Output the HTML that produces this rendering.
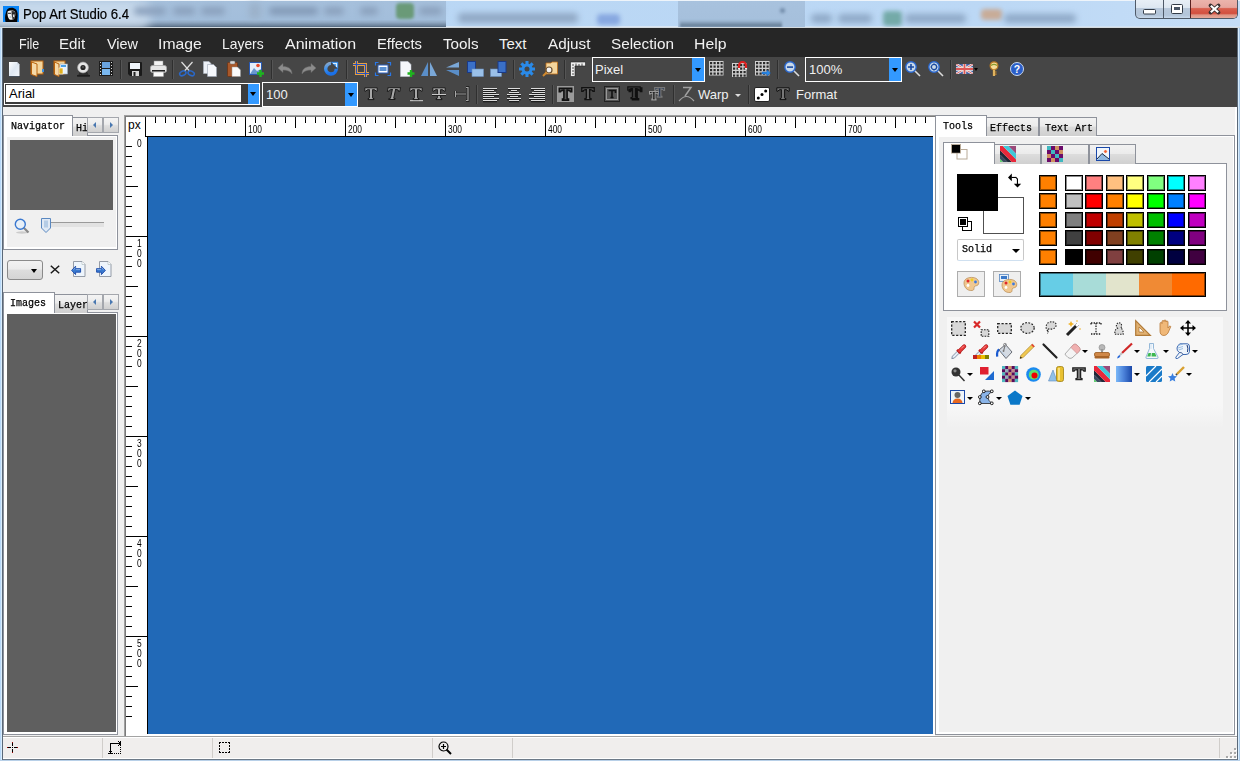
<!DOCTYPE html><html><head><meta charset="utf-8"><style>*{margin:0;padding:0;box-sizing:border-box}
html,body{width:1240px;height:761px;overflow:hidden;background:#c4dcf4;font-family:"Liberation Sans",sans-serif;position:relative}
.a{position:absolute}
svg{position:absolute;overflow:visible}
.t{white-space:nowrap;line-height:1}
.mi{color:#f2f2f2;font-size:15px}
.sep{width:2px;border-left:1px solid #333;border-right:1px solid #5a5a5a}
.tab{font-family:"Liberation Mono",monospace;font-size:11px;color:#000;-webkit-text-stroke:.25px #000;transform:scaleX(.91);transform-origin:0 0}
</style></head><body><div class="a" style="left:0;top:0;width:1240px;height:28px;overflow:hidden;background:linear-gradient(90deg,#b8d6f4 0,#bcd8f5 1000px,#c6def7 1240px)"><div class="a" style="left:-4px;top:0;width:450px;height:28px;background:linear-gradient(180deg,#a6c0dc 0,#a3bedb 70%,#90a8c2 80%,#6a8098 92%,#4d6379 97%,#b8c4d0 100%);filter:blur(.6px)"></div><div class="a" style="left:-10px;top:0px;width:160px;height:30px;background:rgba(214,228,242,.7);filter:blur(5px);border-radius:10px"></div><div class="a" style="left:678px;top:0;width:127px;height:28px;background:linear-gradient(180deg,#a8c2de 0,#a6c0dc 70%,#a6c0dc 100%);filter:blur(.6px)"></div><div class="a" style="left:680px;top:20px;width:102px;height:7px;background:linear-gradient(180deg,rgba(80,104,128,0),rgba(80,104,128,.9));filter:blur(1px)"></div><div class="a" style="left:0;top:0;width:1240px;height:1px;background:#eef4fa"></div><div class="a" style="left:446px;top:26px;width:232px;height:2px;background:#d8e6f4"></div><div class="a" style="left:805px;top:26px;width:435px;height:2px;background:#d0e2f4"></div><div class="a" style="left:134px;top:7px;width:32px;height:8px;background:#8aa0bc;filter:blur(3px);border-radius:4px"></div><div class="a" style="left:173px;top:7px;width:22px;height:8px;background:#8aa0bc;filter:blur(3px);border-radius:4px"></div><div class="a" style="left:201px;top:7px;width:24px;height:8px;background:#8aa0bc;filter:blur(3px);border-radius:4px"></div><div class="a" style="left:249px;top:3px;width:12px;height:16px;background:#9cb2ca;filter:blur(3px);border-radius:4px"></div><div class="a" style="left:269px;top:7px;width:49px;height:8px;background:#8299b6;filter:blur(3px);border-radius:4px"></div><div class="a" style="left:324px;top:7px;width:20px;height:8px;background:#8aa0bc;filter:blur(3px);border-radius:4px"></div><div class="a" style="left:360px;top:7px;width:18px;height:8px;background:#8aa0bc;filter:blur(3px);border-radius:4px"></div><div class="a" style="left:396px;top:3px;width:18px;height:16px;background:#6a9a78;filter:blur(1.5px);border-radius:4px"></div><div class="a" style="left:419px;top:7px;width:23px;height:8px;background:#8aa0bc;filter:blur(3px);border-radius:4px"></div><div class="a" style="left:458px;top:13px;width:120px;height:10px;background:#90a8c4;filter:blur(3px);border-radius:4px"></div><div class="a" style="left:597px;top:14px;width:23px;height:11px;background:#88a8e0;filter:blur(2px);border-radius:4px"></div><div class="a" style="left:780px;top:8px;width:5px;height:5px;background:#708aa8;filter:blur(1.5px);border-radius:4px"></div><div class="a" style="left:811px;top:14px;width:21px;height:9px;background:#8ea8c6;filter:blur(3px);border-radius:4px"></div><div class="a" style="left:838px;top:14px;width:34px;height:9px;background:#8ea8c6;filter:blur(3px);border-radius:4px"></div><div class="a" style="left:883px;top:11px;width:19px;height:15px;background:#74aaa8;filter:blur(2px);border-radius:4px"></div><div class="a" style="left:905px;top:14px;width:61px;height:9px;background:#8ea8c6;filter:blur(3px);border-radius:4px"></div><div class="a" style="left:981px;top:9px;width:21px;height:11px;background:#c8ac98;filter:blur(2px);border-radius:4px"></div><div class="a" style="left:1004px;top:14px;width:72px;height:9px;background:#8ea8c6;filter:blur(3px);border-radius:4px"></div></div><svg style="left:3px;top:6px" width="16" height="16" viewBox="0 0 16 16" ><rect width="16" height="16" fill="#0a86f8"/><path d="M2.5 16 C2 13 1.8 10 2.8 7 C3.5 3.5 5 1.8 8.5 1.8 C12 1.8 14.2 4 14.6 7.5 C15 10.5 14.3 13.5 14.2 16Z" fill="#050505"/><path d="M4.6 5.5 C6 4.2 10.5 4 12 5.5 C12.6 8 12.3 11 11 13 C10 14 7 14.2 6 13 C4.8 11.5 4.2 8 4.6 5.5Z" fill="#f2f2f2"/><path d="M8.5 5 C10.5 5 12 5.5 12 5.5 C12.6 8 12.3 11 11 13 L9.5 13.8 C9.5 11 8.2 9 8.5 5Z" fill="#3a3a3a"/><path d="M5 7.3 H8 M9 7.3 H11.8" stroke="#222" stroke-width="1"/><rect x="10" y="8.5" width="1.5" height="2.5" fill="#ddd"/><path d="M6.5 11 H8.5" stroke="#9aa" stroke-width="1"/></svg><div class="a t " style="left:23.2px;top:7px;font-size:14px;color:#000;transform:scaleX(.94);transform-origin:0 0;-webkit-text-stroke:.2px #000">Pop Art Studio 6.4</div><div class="a" style="left:1135px;top:-1px;width:103px;height:20px;border:1px solid #4f5a68;border-top:none;border-radius:0 0 5px 5px;overflow:hidden;background:linear-gradient(180deg,#e9f0f7 0,#dde7f1 45%,#b9c9db 50%,#b3c5d9 85%,#c8d8ea 100%)"><div class="a" style="left:27px;top:0;width:1px;height:20px;background:#4f5a68"></div><div class="a" style="left:54px;top:0;width:48px;height:20px;border-left:1px solid #5a2020;background:linear-gradient(180deg,#ecb6ae 0,#e6a69e 42%,#d9604f 48%,#d2503f 72%,#de9484 80%,#e8b0a0 100%)"></div></div><svg style="left:1143px;top:9px" width="13" height="6" viewBox="0 0 13 6" ><rect x=".5" y=".5" width="12" height="4.5" rx="1" fill="#fff" stroke="#333c48"/></svg><svg style="left:1171px;top:4px" width="12" height="10" viewBox="0 0 12 10" ><rect x=".5" y=".5" width="11" height="9" rx="1" fill="#fff" stroke="#333c48"/><rect x="3" y="3" width="6" height="3" fill="#4a5666"/></svg><svg style="left:1209px;top:4px" width="11" height="10" viewBox="0 0 11 10" ><path d="M1.5 1.5 L9.5 8.5 M9.5 1.5 L1.5 8.5" stroke="#3a3030" stroke-width="3.8" stroke-linecap="round"/><path d="M1.8 1.7 L9.2 8.3 M9.2 1.7 L1.8 8.3" stroke="#fff" stroke-width="2.2"/></svg><div class="a " style="left:0px;top:27px;width:2px;height:734px;background:linear-gradient(90deg,#b8d8f8 0,#b8d8f8 1px,#d8ecfc 1px)"></div><div class="a " style="left:2px;top:28px;width:1px;height:733px;background:#5a6878"></div><div class="a " style="left:1237px;top:28px;width:1px;height:733px;background:#5a6878"></div><div class="a " style="left:1238px;top:27px;width:2px;height:734px;background:linear-gradient(90deg,#d8ecfc 0,#d8ecfc 1px,#a8c8e8 1px)"></div><div class="a " style="left:0px;top:27px;width:1240px;height:1px;background:#d4dade"></div><div class="a " style="left:0px;top:760px;width:1240px;height:1px;background:#b8d0e8"></div><div class="a " style="left:3px;top:28px;width:1234px;height:29px;background:#262626"></div><div class="a t mi" style="left:18.66px;top:36px;transform:scaleX(0.837);transform-origin:0 0">File</div><div class="a t mi" style="left:59.49px;top:36px;transform:scaleX(1.010);transform-origin:0 0">Edit</div><div class="a t mi" style="left:107.0px;top:36px;transform:scaleX(0.962);transform-origin:0 0">View</div><div class="a t mi" style="left:158.45px;top:36px;transform:scaleX(1.050);transform-origin:0 0">Image</div><div class="a t mi" style="left:222.07px;top:36px;transform:scaleX(0.926);transform-origin:0 0">Layers</div><div class="a t mi" style="left:285.2px;top:36px;transform:scaleX(1.065);transform-origin:0 0">Animation</div><div class="a t mi" style="left:376.51px;top:36px;transform:scaleX(0.986);transform-origin:0 0">Effects</div><div class="a t mi" style="left:442.5px;top:36px;transform:scaleX(1.014);transform-origin:0 0">Tools</div><div class="a t mi" style="left:499.0px;top:36px;transform:scaleX(1.000);transform-origin:0 0">Text</div><div class="a t mi" style="left:548.3px;top:36px;transform:scaleX(1.017);transform-origin:0 0">Adjust</div><div class="a t mi" style="left:611.18px;top:36px;transform:scaleX(1.020);transform-origin:0 0">Selection</div><div class="a t mi" style="left:694.35px;top:36px;transform:scaleX(1.053);transform-origin:0 0">Help</div><div class="a " style="left:3px;top:57px;width:1234px;height:50px;background:#464646"></div><div class="a " style="left:3px;top:107px;width:1234px;height:629px;background:#f0f0f0"></div><div class="a " style="left:1235px;top:107px;width:2px;height:629px;background:#fff"></div><div class="a " style="left:3px;top:736px;width:1234px;height:24px;background:#f0eeed;border-top:1px solid #a3a3a3;border-bottom:1px solid #6d7a88;box-shadow:inset 0 1px 0 #fff,inset 0 -1px 0 #fff"></div><svg style="left:9px;top:62px" width="11" height="15" viewBox="0 0 11 15" ><defs><linearGradient id="pg" x1="0" y1="0" x2="1" y2="1"><stop offset="0" stop-color="#fff"/><stop offset=".5" stop-color="#dfe8f2"/><stop offset="1" stop-color="#f4f8fc"/></linearGradient></defs><path d="M0 0H8L10.5 2.5V14.5H0Z" fill="url(#pg)"/><path d="M8 0V2.5H10.5" fill="#cfd8e2"/><rect x="0" y="14" width="11" height="1" fill="#243040" opacity=".7"/></svg><svg style="left:31px;top:61px" width="13" height="16" viewBox="0 0 13 16" ><rect x="0" y="0" width="12" height="13" fill="#f3d59d" stroke="#b8620c" stroke-width="1"/><path d="M0.5 1 L6 3 V15.5 L0.5 13.5Z" fill="#f5d9a8" stroke="#b8620c"/><rect x="11" y="8" width="2" height="3" fill="#3a8fe0"/></svg><svg style="left:54px;top:61px" width="14" height="16" viewBox="0 0 14 16" ><rect x="0" y="0" width="11" height="13" fill="#f3d59d" stroke="#b8620c"/><path d="M0.5 1 L5 3 V15.5 L0.5 13.5Z" fill="#f5d9a8" stroke="#b8620c"/><rect x="6" y="3" width="7.5" height="10" fill="#e8f2fc" stroke="#9ab" stroke-width=".6"/><rect x="7" y="4" width="5" height="2" fill="#4aa0e8"/><rect x="5" y="7" width="4" height="6" fill="#e0b020" stroke="#fff" stroke-width=".6"/></svg><svg style="left:76px;top:61px" width="15" height="16" viewBox="0 0 15 16" ><path d="M2 15 L5 10 H10 L13 15Z" fill="#2e2e2e" stroke="#262626" stroke-width=".6"/><rect x="1" y="14" width="13" height="1.6" fill="#1e1e1e"/><circle cx="7" cy="6.5" r="5.4" fill="#e6e6e6" stroke="#a8a8a8" stroke-width=".7"/><circle cx="7" cy="6.5" r="2.6" fill="#262626"/><circle cx="7" cy="6" r=".9" fill="#555"/></svg><svg style="left:99px;top:61px" width="14" height="15" viewBox="0 0 14 15" ><rect width="14" height="15" fill="#1e1e1e"/><rect x="3" y="1" width="8" height="6" fill="#6aa4e0"/><rect x="3" y="8" width="8" height="6" fill="#7ab8f0"/><g fill="#ddd"><rect x="1" y="1" width="1" height="1"/><rect x="1" y="4" width="1" height="1"/><rect x="1" y="7" width="1" height="1"/><rect x="1" y="10" width="1" height="1"/><rect x="1" y="13" width="1" height="1"/><rect x="12" y="1" width="1" height="1"/><rect x="12" y="4" width="1" height="1"/><rect x="12" y="7" width="1" height="1"/><rect x="12" y="10" width="1" height="1"/><rect x="12" y="13" width="1" height="1"/></g></svg><svg style="left:128px;top:62px" width="14" height="14" viewBox="0 0 14 14" ><path d="M0 1 Q0 0 1 0 H13 Q14 0 14 1 V13 Q14 14 13 14 H2 L0 12Z" fill="#1a1a1a"/><rect x="2" y="1" width="10" height="6" fill="#eef4fa"/><rect x="4" y="9" width="7" height="5" fill="#d8d8d8"/><rect x="5.5" y="10" width="2" height="4" fill="#222"/></svg><svg style="left:150px;top:61px" width="17" height="16" viewBox="0 0 17 16" ><rect x="4" y="0" width="9" height="5" fill="#f4f4f4" stroke="#999" stroke-width=".5"/><rect x="0.5" y="4.5" width="16" height="7" rx="2" fill="#e6e6e6" stroke="#aaa" stroke-width=".8"/><rect x="2" y="9" width="13" height="1.6" fill="#222"/><rect x="3.5" y="11" width="10" height="4.5" fill="#fafafa" stroke="#aaa" stroke-width=".5"/></svg><svg style="left:179px;top:61px" width="16" height="16" viewBox="0 0 16 16" ><path d="M2.5 1 L10.5 10 M13.5 1 L5.5 10" stroke="#e0e0e0" stroke-width="1.2"/><ellipse cx="3.8" cy="12.3" rx="3.3" ry="2.2" transform="rotate(-25 3.8 12.3)" fill="none" stroke="#2a68c8" stroke-width="1.5"/><ellipse cx="12.2" cy="12.3" rx="3.3" ry="2.2" transform="rotate(25 12.2 12.3)" fill="none" stroke="#2a68c8" stroke-width="1.5"/></svg><svg style="left:203px;top:61px" width="14" height="16" viewBox="0 0 14 16" ><path d="M0.5 0.5H6L8 2.5V12.5H0.5Z" fill="#eef2f8" stroke="#b0b8c4" stroke-width=".6"/><path d="M4.5 3.5H10.5L13.5 6.5V15.5H4.5Z" fill="#f6f8fc" stroke="#9aa4b4" stroke-width=".6"/></svg><svg style="left:227px;top:61px" width="14" height="16" viewBox="0 0 14 16" ><rect x="0.5" y="1.5" width="10" height="14" rx="1" fill="#a8582a" stroke="#6e3414" stroke-width=".8"/><rect x="3" y="0" width="5" height="3" rx="1" fill="#d8d8d8" stroke="#777" stroke-width=".5"/><path d="M5 6H10.5L13.5 9V15.5H5Z" fill="#fafafa" stroke="#999" stroke-width=".5"/></svg><svg style="left:249px;top:61px" width="15" height="16" viewBox="0 0 15 16" ><rect x="0.5" y="1.5" width="12" height="12" fill="#e4eefa" stroke="#2858b0" stroke-width="1"/><path d="M1 13 L5 7 L8 10 L12 8 V13Z" fill="#6a98d0"/><circle cx="9" cy="4.5" r="1.8" fill="#e84a2a"/><path d="M11.5 9 V16 M8 12.5 H15" stroke="#1eb41e" stroke-width="2.4"/></svg><div class="a " style="left:120px;top:60px;width:1px;height:19px;background:#2f2f2f;box-shadow:1px 0 0 #555"></div><div class="a " style="left:172px;top:60px;width:1px;height:19px;background:#2f2f2f;box-shadow:1px 0 0 #555"></div><div class="a " style="left:271px;top:60px;width:1px;height:19px;background:#2f2f2f;box-shadow:1px 0 0 #555"></div><div class="a " style="left:346px;top:60px;width:1px;height:19px;background:#2f2f2f;box-shadow:1px 0 0 #555"></div><div class="a " style="left:513px;top:60px;width:1px;height:19px;background:#2f2f2f;box-shadow:1px 0 0 #555"></div><div class="a " style="left:564px;top:60px;width:1px;height:19px;background:#2f2f2f;box-shadow:1px 0 0 #555"></div><div class="a " style="left:777px;top:60px;width:1px;height:19px;background:#2f2f2f;box-shadow:1px 0 0 #555"></div><div class="a " style="left:950px;top:60px;width:1px;height:19px;background:#2f2f2f;box-shadow:1px 0 0 #555"></div><svg style="left:277px;top:63px" width="16" height="12" viewBox="0 0 16 12" ><path d="M1 5 L6 0.5 V3.5 C11 3.5 15 5.5 15 11 C13 8 10 7 6 7 V9.5Z" fill="#8c8c8c" stroke="#6c6c6c" stroke-width=".5"/></svg><svg style="left:301px;top:63px" width="16" height="12" viewBox="0 0 16 12" ><path d="M15 5 L10 0.5 V3.5 C5 3.5 1 5.5 1 11 C3 8 6 7 10 7 V9.5Z" fill="#8c8c8c" stroke="#6c6c6c" stroke-width=".5"/></svg><svg style="left:323px;top:61px" width="16" height="16" viewBox="0 0 16 16" ><defs><linearGradient id="rg" x1="0" y1="0" x2=".3" y2="1"><stop offset="0" stop-color="#8aa8c8"/><stop offset=".5" stop-color="#3a90f0"/><stop offset="1" stop-color="#1a70e8"/></linearGradient></defs><path d="M8 2.4 A5.3 5.3 0 1 0 13.3 7.7" fill="none" stroke="url(#rg)" stroke-width="3.4"/><path d="M8.2 1 H15 V7.8Z" fill="#4a9ef0" stroke="#2a70d0" stroke-width=".5"/><path d="M10 2.5 H13.5 V6" fill="none" stroke="#d8ecff" stroke-width="1.1"/></svg><svg style="left:353px;top:61px" width="16" height="16" viewBox="0 0 16 16" ><path d="M3.5 0 V12.5 H16 M0 3.5 H12.5 V16" fill="none" stroke="#e8a040" stroke-width="3"/><path d="M3.5 0 V12.5 H16 M0 3.5 H12.5 V16" fill="none" stroke="#2050c0" stroke-width="1.2"/></svg><svg style="left:375px;top:62px" width="16" height="14" viewBox="0 0 16 14" ><rect x="3" y="3" width="10" height="8" fill="#fff" stroke="#2a60c0"/><rect x="4.5" y="5" width="7" height="4" fill="#5a90d0"/><path d="M0.5 3.5V0.5H3.5 M12.5 0.5H15.5V3.5 M15.5 10.5V13.5H12.5 M3.5 13.5H0.5V10.5" fill="none" stroke="#2a78e8" stroke-width="1.2"/></svg><svg style="left:400px;top:61px" width="15" height="16" viewBox="0 0 15 16" ><path d="M0.5 0.5H8L11 3.5V15.5H0.5Z" fill="#f4f6fa" stroke="#c4ccd8" stroke-width=".5"/><path d="M11 9 V16 M7.5 12.5 H14.5" stroke="#1eb41e" stroke-width="2.4"/></svg><svg style="left:421px;top:62px" width="16" height="14" viewBox="0 0 16 14" ><path d="M7 0 V14 H0Z" fill="#5a8ec8"/><path d="M9 0 V14 H16Z" fill="#7aa8d8"/></svg><svg style="left:446px;top:62px" width="13" height="14" viewBox="0 0 13 14" ><path d="M13 0 L0 5.5 H13Z" fill="#7aa8d8"/><path d="M13 14 L0 8 H13Z" fill="#5a8ec8"/></svg><svg style="left:467px;top:61px" width="17" height="16" viewBox="0 0 17 16" ><rect x="0.5" y="0.5" width="8" height="11" fill="#3a70c8" stroke="#1a3a88"/><rect x="5" y="8" width="11.5" height="7.5" fill="#9ac0e8" stroke="#6a90c0" stroke-width=".6"/></svg><svg style="left:490px;top:61px" width="17" height="16" viewBox="0 0 17 16" ><rect x="0.5" y="8" width="11" height="7.5" fill="#9ac0e8" stroke="#6a90c0" stroke-width=".6"/><rect x="8" y="0.5" width="8" height="11" fill="#3a70c8" stroke="#1a3a88"/></svg><svg style="left:519px;top:61px" width="16" height="16" viewBox="0 0 16 16" ><g fill="#2a8ae8"><circle cx="8" cy="8" r="5.5"/><rect x="6.5" y="0" width="3" height="16"/><rect x="0" y="6.5" width="16" height="3"/><rect x="6.5" y="0" width="3" height="16" transform="rotate(45 8 8)"/><rect x="6.5" y="0" width="3" height="16" transform="rotate(-45 8 8)"/></g><circle cx="8" cy="8" r="2.5" fill="#464646"/></svg><svg style="left:542px;top:61px" width="16" height="16" viewBox="0 0 16 16" ><path d="M4 2 H9 L10 1 H15.5 V13 H4Z" fill="#f3d59d" stroke="#c07018" stroke-width=".8"/><circle cx="7" cy="9" r="3" fill="#f4f4f4" stroke="#6a5030" stroke-width="1.2"/><path d="M4.8 11.2 L1 15" stroke="#d08a30" stroke-width="2"/></svg><svg style="left:570px;top:61px" width="16" height="16" viewBox="0 0 16 16" ><path d="M0.5 1H15.5V5H5V15.5H0.5Z" fill="#f0f0f0" stroke="#222" stroke-width=".6"/><g stroke="#222" stroke-width=".8"><path d="M3 5V3 M6 5V2.5 M9 5V3 M12 5V2.5 M4 7H2 M4 10H2 M4 13H2"/></g></svg><div class="a" style="left:592px;top:57px;width:113px;height:25px;border:1px solid #fff;background:#464646"></div><div class="a" style="left:692px;top:58px;width:12px;height:23px;background:#3399ff"></div><div class="a" style="left:695px;top:68px;width:0;height:0;border-left:3.5px solid transparent;border-right:3.5px solid transparent;border-top:4px solid #000"></div><div class="a t " style="left:595px;top:63px;font-size:13px;color:#f0f0f0">Pixel</div><svg style="left:709px;top:61px" width="16" height="16" viewBox="0 0 16 16" ><rect x="0" y="0" width="14.5" height="14.5" fill="#cfcfcf"/><rect x="1.0" y="1.0" width="2.2" height="2.2" fill="#2a2a2a"/><rect x="1.0" y="4.5" width="2.2" height="2.2" fill="#2a2a2a"/><rect x="1.0" y="8.0" width="2.2" height="2.2" fill="#2a2a2a"/><rect x="1.0" y="11.5" width="2.2" height="2.2" fill="#2a2a2a"/><rect x="4.5" y="1.0" width="2.2" height="2.2" fill="#2a2a2a"/><rect x="4.5" y="4.5" width="2.2" height="2.2" fill="#2a2a2a"/><rect x="4.5" y="8.0" width="2.2" height="2.2" fill="#2a2a2a"/><rect x="4.5" y="11.5" width="2.2" height="2.2" fill="#2a2a2a"/><rect x="8.0" y="1.0" width="2.2" height="2.2" fill="#2a2a2a"/><rect x="8.0" y="4.5" width="2.2" height="2.2" fill="#2a2a2a"/><rect x="8.0" y="8.0" width="2.2" height="2.2" fill="#2a2a2a"/><rect x="8.0" y="11.5" width="2.2" height="2.2" fill="#2a2a2a"/><rect x="11.5" y="1.0" width="2.2" height="2.2" fill="#2a2a2a"/><rect x="11.5" y="4.5" width="2.2" height="2.2" fill="#2a2a2a"/><rect x="11.5" y="8.0" width="2.2" height="2.2" fill="#2a2a2a"/><rect x="11.5" y="11.5" width="2.2" height="2.2" fill="#2a2a2a"/></svg><svg style="left:732px;top:61px" width="16" height="16" viewBox="0 0 16 16" ><rect x="0" y="2" width="14.5" height="14" fill="#cfcfcf"/><rect x="1.0" y="3.0" width="2.2" height="2.2" fill="#2a2a2a"/><rect x="1.0" y="6.5" width="2.2" height="2.2" fill="#2a2a2a"/><rect x="1.0" y="10.0" width="2.2" height="2.2" fill="#2a2a2a"/><rect x="1.0" y="13.5" width="2.2" height="2.2" fill="#2a2a2a"/><rect x="4.5" y="3.0" width="2.2" height="2.2" fill="#2a2a2a"/><rect x="4.5" y="6.5" width="2.2" height="2.2" fill="#2a2a2a"/><rect x="4.5" y="10.0" width="2.2" height="2.2" fill="#2a2a2a"/><rect x="4.5" y="13.5" width="2.2" height="2.2" fill="#2a2a2a"/><rect x="8.0" y="3.0" width="2.2" height="2.2" fill="#2a2a2a"/><rect x="8.0" y="6.5" width="2.2" height="2.2" fill="#2a2a2a"/><rect x="8.0" y="10.0" width="2.2" height="2.2" fill="#2a2a2a"/><rect x="8.0" y="13.5" width="2.2" height="2.2" fill="#2a2a2a"/><rect x="11.5" y="3.0" width="2.2" height="2.2" fill="#2a2a2a"/><rect x="11.5" y="6.5" width="2.2" height="2.2" fill="#2a2a2a"/><rect x="11.5" y="10.0" width="2.2" height="2.2" fill="#2a2a2a"/><rect x="11.5" y="13.5" width="2.2" height="2.2" fill="#2a2a2a"/><path d="M7 7 V4.5 A3.5 3.5 0 0 1 14 4.5 V7" fill="none" stroke="#e02020" stroke-width="2.2"/><path d="M7 7 V8.5 M14 7 V8.5" stroke="#eee" stroke-width="2.2"/></svg><svg style="left:755px;top:61px" width="16" height="16" viewBox="0 0 16 16" ><rect x="0" y="0" width="14.5" height="14.5" fill="#cfcfcf"/><rect x="1.0" y="1.0" width="2.2" height="2.2" fill="#2a2a2a"/><rect x="1.0" y="4.5" width="2.2" height="2.2" fill="#2a2a2a"/><rect x="1.0" y="8.0" width="2.2" height="2.2" fill="#2a2a2a"/><rect x="1.0" y="11.5" width="2.2" height="2.2" fill="#2a2a2a"/><rect x="4.5" y="1.0" width="2.2" height="2.2" fill="#2a2a2a"/><rect x="4.5" y="4.5" width="2.2" height="2.2" fill="#2a2a2a"/><rect x="4.5" y="8.0" width="2.2" height="2.2" fill="#2a2a2a"/><rect x="4.5" y="11.5" width="2.2" height="2.2" fill="#2a2a2a"/><rect x="8.0" y="1.0" width="2.2" height="2.2" fill="#2a2a2a"/><rect x="8.0" y="4.5" width="2.2" height="2.2" fill="#2a2a2a"/><rect x="8.0" y="8.0" width="2.2" height="2.2" fill="#2a2a2a"/><rect x="8.0" y="11.5" width="2.2" height="2.2" fill="#2a2a2a"/><rect x="11.5" y="1.0" width="2.2" height="2.2" fill="#2a2a2a"/><rect x="11.5" y="4.5" width="2.2" height="2.2" fill="#2a2a2a"/><rect x="11.5" y="8.0" width="2.2" height="2.2" fill="#2a2a2a"/><rect x="11.5" y="11.5" width="2.2" height="2.2" fill="#2a2a2a"/><path d="M7 11 H12 V9 L15.5 12 L12 15 V13 H7Z" fill="#2a8ae8" stroke="#1858b0" stroke-width=".5"/></svg><svg style="left:784px;top:61px" width="16" height="16" viewBox="0 0 16 16" ><path d="M9.5 9.5 L15 15" stroke="#dcdcdc" stroke-width="1.6"/><circle cx="6" cy="6" r="5.2" fill="#c8d8e8" stroke="#2a68d0" stroke-width="1.4"/><rect x="3" y="5.3" width="6" height="1.6" fill="#1a4aa0"/></svg><div class="a" style="left:805px;top:57px;width:97px;height:25px;border:1px solid #fff;background:#464646"></div><div class="a" style="left:889px;top:58px;width:12px;height:23px;background:#3399ff"></div><div class="a" style="left:892px;top:68px;width:0;height:0;border-left:3.5px solid transparent;border-right:3.5px solid transparent;border-top:4px solid #000"></div><div class="a t " style="left:809px;top:63px;font-size:13px;color:#f0f0f0">100%</div><svg style="left:905px;top:61px" width="16" height="16" viewBox="0 0 16 16" ><path d="M9.5 9.5 L15 15" stroke="#dcdcdc" stroke-width="1.6"/><circle cx="6" cy="6" r="5.2" fill="#c8d8e8" stroke="#2a68d0" stroke-width="1.4"/><path d="M3 6 H9 M6 3 V9" stroke="#1a4aa0" stroke-width="1.6"/></svg><svg style="left:928px;top:61px" width="16" height="16" viewBox="0 0 16 16" ><path d="M9.5 9.5 L15 15" stroke="#dcdcdc" stroke-width="1.6"/><circle cx="6" cy="6" r="5.2" fill="#c8d8e8" stroke="#2a68d0" stroke-width="1.4"/><circle cx="6" cy="6" r="2.6" fill="none" stroke="#1a4aa0" stroke-width="1.2"/><path d="M6 2.5V4 M6 8V9.5 M2.5 6H4 M8 6H9.5" stroke="#1a4aa0" stroke-width="1.2"/></svg><svg style="left:956px;top:64px" width="17" height="10" viewBox="0 0 17 10" ><defs><clipPath id="fl"><rect width="17" height="10"/></clipPath></defs><g clip-path="url(#fl)"><rect width="17" height="10" fill="#2a4a9a"/><path d="M0 0 L17 10 M17 0 L0 10" stroke="#f0e8e8" stroke-width="2.4"/><path d="M0 0 L17 10 M17 0 L0 10" stroke="#d04848" stroke-width=".9"/><path d="M8.5 0 V10 M0 5 H17" stroke="#f0e8e0" stroke-width="3.4"/><path d="M8.5 0 V10 M0 5 H17" stroke="#d84040" stroke-width="1.8"/><rect width="17" height="10" fill="#fff" opacity=".12"/></g></svg><div class="a" style="left:974px;top:68px;width:0;height:0;border-left:2.5px solid transparent;border-right:2.5px solid transparent;border-top:3px solid #000"></div><svg style="left:988px;top:61px" width="12" height="16" viewBox="0 0 12 16" ><circle cx="6" cy="4.8" r="3.9" fill="#f6dc98" stroke="#b87820" stroke-width="1.2"/><path d="M3 4.5 Q6 2.2 9 4.5" fill="none" stroke="#8a9a30" stroke-width="1.2"/><path d="M6 8.6 V15" stroke="#c88a28" stroke-width="2.4"/><path d="M6 8.6 V15" stroke="#f6dc98" stroke-width="1"/><path d="M7 11 H8.6 M7 13.2 H8.6" stroke="#c88a28" stroke-width="1.2"/></svg><svg style="left:1010px;top:62px" width="14" height="14" viewBox="0 0 14 14" ><circle cx="7" cy="7" r="6.5" fill="#2a5ec8" stroke="#c8d8f0" stroke-width="1"/><text x="7" y="11.2" text-anchor="middle" font-family="Liberation Sans" font-weight="bold" font-size="10.5" fill="#fff">?</text></svg><div class="a" style="left:4px;top:83px;width:256px;height:22px;border:1px solid #fff;background:#3c3c3c"></div><div class="a" style="left:6px;top:85px;width:235px;height:17px;background:#fff"></div><div class="a" style="left:248px;top:84px;width:11px;height:20px;background:#3399ff"></div><div class="a" style="left:250px;top:92px;width:0;height:0;border-left:3.5px solid transparent;border-right:3.5px solid transparent;border-top:4px solid #000"></div><div class="a t " style="left:9px;top:87px;font-size:13px;color:#000">Arial</div><div class="a" style="left:262px;top:82px;width:96px;height:25px;border:1px solid #fff;background:#464646"></div><div class="a" style="left:345px;top:83px;width:12px;height:23px;background:#3399ff"></div><div class="a" style="left:348px;top:93px;width:0;height:0;border-left:3.5px solid transparent;border-right:3.5px solid transparent;border-top:4px solid #000"></div><div class="a t " style="left:266px;top:88px;font-size:13px;color:#f0f0f0">100</div><svg style="left:364px;top:87px" width="15" height="14" viewBox="0 0 15 14" ><path d="M0.8 0.8 H13.2 V4.2 H12 Q11.5 2.6 9.2 2.6 H8.6 V10.8 Q8.6 11.6 10 11.6 V12.6 H4 V11.6 Q5.4 11.6 5.4 10.8 V2.6 H4.8 Q2.5 2.6 2 4.2 H0.8Z" fill="#a8a8a8" stroke="#1a1a1a" stroke-width="1" /></svg><svg style="left:386px;top:87px" width="15" height="14" viewBox="0 0 15 14" ><path d="M0.8 0.8 H13.2 V4.2 H12 Q11.5 2.6 9.2 2.6 H8.6 V10.8 Q8.6 11.6 10 11.6 V12.6 H4 V11.6 Q5.4 11.6 5.4 10.8 V2.6 H4.8 Q2.5 2.6 2 4.2 H0.8Z" fill="#a8a8a8" stroke="#1a1a1a" stroke-width="1" transform="skewX(-12) translate(1.5 0)"/></svg><svg style="left:409px;top:87px" width="15" height="14" viewBox="0 0 15 14" ><rect x="1" y="13" width="13" height="1.2" fill="#bbb"/><path d="M0.8 0.8 H13.2 V4.2 H12 Q11.5 2.6 9.2 2.6 H8.6 V10.8 Q8.6 11.6 10 11.6 V12.6 H4 V11.6 Q5.4 11.6 5.4 10.8 V2.6 H4.8 Q2.5 2.6 2 4.2 H0.8Z" fill="#a8a8a8" stroke="#1a1a1a" stroke-width="1" /></svg><svg style="left:432px;top:87px" width="15" height="14" viewBox="0 0 15 14" ><path d="M0.8 0.8 H13.2 V4.2 H12 Q11.5 2.6 9.2 2.6 H8.6 V10.8 Q8.6 11.6 10 11.6 V12.6 H4 V11.6 Q5.4 11.6 5.4 10.8 V2.6 H4.8 Q2.5 2.6 2 4.2 H0.8Z" fill="#a8a8a8" stroke="#1a1a1a" stroke-width="1" /></svg><div class="a" style="left:432px;top:94px;width:14px;height:1px;background:#c8c8c8;box-shadow:0 1px 0 #222"></div><svg style="left:455px;top:87px" width="14" height="14" viewBox="0 0 14 14" ><path d="M0.5 4 V10 M0.5 7 H11 M11 0.5 H13 V13.5 H11" fill="none" stroke="#1a1a1a" stroke-width="2.6"/><path d="M0.5 4 V10 M0.5 7 H11 M11 0.5 H13 V13.5 H11" fill="none" stroke="#a8a8a8" stroke-width="1.2"/></svg><div class="a " style="left:476px;top:85px;width:1px;height:19px;background:#2f2f2f;box-shadow:1px 0 0 #555"></div><div class="a " style="left:552px;top:85px;width:1px;height:19px;background:#2f2f2f;box-shadow:1px 0 0 #555"></div><div class="a " style="left:673px;top:85px;width:1px;height:19px;background:#2f2f2f;box-shadow:1px 0 0 #555"></div><div class="a " style="left:748px;top:85px;width:1px;height:19px;background:#2f2f2f;box-shadow:1px 0 0 #555"></div><svg style="left:483px;top:88px" width="16" height="14" viewBox="0 0 16 14" ><rect x="0" y="1" width="14" height="1.3" fill="#1e1e1e"/><rect x="0" y="0" width="14" height="1" fill="#dcdcdc"/><rect x="0" y="3" width="11" height="1.3" fill="#1e1e1e"/><rect x="0" y="2" width="11" height="1" fill="#dcdcdc"/><rect x="0" y="5" width="13" height="1.3" fill="#1e1e1e"/><rect x="0" y="4" width="13" height="1" fill="#dcdcdc"/><rect x="0" y="7" width="16" height="1.3" fill="#1e1e1e"/><rect x="0" y="6" width="16" height="1" fill="#dcdcdc"/><rect x="0" y="9" width="11" height="1.3" fill="#1e1e1e"/><rect x="0" y="8" width="11" height="1" fill="#dcdcdc"/><rect x="0" y="11" width="16" height="1.3" fill="#1e1e1e"/><rect x="0" y="10" width="16" height="1" fill="#dcdcdc"/><rect x="0" y="13" width="14" height="1.3" fill="#1e1e1e"/><rect x="0" y="12" width="14" height="1" fill="#dcdcdc"/></svg><svg style="left:506px;top:88px" width="16" height="14" viewBox="0 0 16 14" ><rect x="2.0" y="1" width="12" height="1.3" fill="#1e1e1e"/><rect x="2.0" y="0" width="12" height="1" fill="#dcdcdc"/><rect x="5.0" y="3" width="6" height="1.3" fill="#1e1e1e"/><rect x="5.0" y="2" width="6" height="1" fill="#dcdcdc"/><rect x="3.0" y="5" width="10" height="1.3" fill="#1e1e1e"/><rect x="3.0" y="4" width="10" height="1" fill="#dcdcdc"/><rect x="1.0" y="7" width="14" height="1.3" fill="#1e1e1e"/><rect x="1.0" y="6" width="14" height="1" fill="#dcdcdc"/><rect x="4.0" y="9" width="8" height="1.3" fill="#1e1e1e"/><rect x="4.0" y="8" width="8" height="1" fill="#dcdcdc"/><rect x="1.0" y="11" width="14" height="1.3" fill="#1e1e1e"/><rect x="1.0" y="10" width="14" height="1" fill="#dcdcdc"/><rect x="3.0" y="13" width="10" height="1.3" fill="#1e1e1e"/><rect x="3.0" y="12" width="10" height="1" fill="#dcdcdc"/></svg><svg style="left:529px;top:88px" width="16" height="14" viewBox="0 0 16 14" ><rect x="2" y="1" width="14" height="1.3" fill="#1e1e1e"/><rect x="2" y="0" width="14" height="1" fill="#dcdcdc"/><rect x="5" y="3" width="11" height="1.3" fill="#1e1e1e"/><rect x="5" y="2" width="11" height="1" fill="#dcdcdc"/><rect x="3" y="5" width="13" height="1.3" fill="#1e1e1e"/><rect x="3" y="4" width="13" height="1" fill="#dcdcdc"/><rect x="0" y="7" width="16" height="1.3" fill="#1e1e1e"/><rect x="0" y="6" width="16" height="1" fill="#dcdcdc"/><rect x="5" y="9" width="11" height="1.3" fill="#1e1e1e"/><rect x="5" y="8" width="11" height="1" fill="#dcdcdc"/><rect x="0" y="11" width="16" height="1.3" fill="#1e1e1e"/><rect x="0" y="10" width="16" height="1" fill="#dcdcdc"/><rect x="2" y="13" width="14" height="1.3" fill="#1e1e1e"/><rect x="2" y="12" width="14" height="1" fill="#dcdcdc"/></svg><svg style="left:557px;top:86px" width="17" height="16" viewBox="0 0 17 16" ><rect x="0" y="0" width="17" height="16" fill="#9a9a9a"/><path d="M0.8 0.8 H13.2 V4.2 H12 Q11.5 2.6 9.2 2.6 H8.6 V10.8 Q8.6 11.6 10 11.6 V12.6 H4 V11.6 Q5.4 11.6 5.4 10.8 V2.6 H4.8 Q2.5 2.6 2 4.2 H0.8Z" fill="#555" stroke="#111" stroke-width="1.6" transform="translate(1.5 1.5)"/></svg><svg style="left:581px;top:87px" width="15" height="14" viewBox="0 0 15 14" ><path d="M0.8 0.8 H13.2 V4.2 H12 Q11.5 2.6 9.2 2.6 H8.6 V10.8 Q8.6 11.6 10 11.6 V12.6 H4 V11.6 Q5.4 11.6 5.4 10.8 V2.6 H4.8 Q2.5 2.6 2 4.2 H0.8Z" fill="#6a6a6a" stroke="#111" stroke-width="1.4"/></svg><svg style="left:604px;top:86px" width="16" height="16" viewBox="0 0 16 16" ><rect x=".5" y=".5" width="15" height="15" fill="#555" stroke="#222"/><rect x="2.5" y="2.5" width="11" height="11" fill="none" stroke="#999"/><path d="M4.5 4.5 H11.5 V7 M8 4.5 V11.5 M6.5 11.5 H9.5" stroke="#111" stroke-width="1.6" fill="none"/></svg><svg style="left:627px;top:86px" width="16" height="15" viewBox="0 0 16 15" ><path d="M0.8 0.8 H13.2 V4.2 H12 Q11.5 2.6 9.2 2.6 H8.6 V10.8 Q8.6 11.6 10 11.6 V12.6 H4 V11.6 Q5.4 11.6 5.4 10.8 V2.6 H4.8 Q2.5 2.6 2 4.2 H0.8Z" fill="#111" stroke="#111" stroke-width="1.6" transform="translate(1.5 1.2)"/><path d="M0.8 0.8 H13.2 V4.2 H12 Q11.5 2.6 9.2 2.6 H8.6 V10.8 Q8.6 11.6 10 11.6 V12.6 H4 V11.6 Q5.4 11.6 5.4 10.8 V2.6 H4.8 Q2.5 2.6 2 4.2 H0.8Z" fill="#3a3a3a" stroke="#111" stroke-width="1.2"/></svg><svg style="left:649px;top:87px" width="17" height="14" viewBox="0 0 17 14" ><path d="M0.8 0.8 H13.2 V4.2 H12 Q11.5 2.6 9.2 2.6 H8.6 V10.8 Q8.6 11.6 10 11.6 V12.6 H4 V11.6 Q5.4 11.6 5.4 10.8 V2.6 H4.8 Q2.5 2.6 2 4.2 H0.8Z" fill="#2a3a55" stroke="#777" stroke-width="1.4" transform="translate(5 0) scale(.8)"/><path d="M0.8 0.8 H13.2 V4.2 H12 Q11.5 2.6 9.2 2.6 H8.6 V10.8 Q8.6 11.6 10 11.6 V12.6 H4 V11.6 Q5.4 11.6 5.4 10.8 V2.6 H4.8 Q2.5 2.6 2 4.2 H0.8Z" fill="#000" stroke="#999" stroke-width="1.6" transform="translate(0 4) scale(.7)"/></svg><svg style="left:678px;top:86px" width="17" height="16" viewBox="0 0 17 16" ><path d="M5 1.5 H13 L7 10" fill="none" stroke="#a0a0a0" stroke-width="1.5"/><path d="M1 15 Q8.5 6 16 15" fill="none" stroke="#a0a0a0" stroke-width="1.2"/></svg><div class="a t " style="left:698px;top:88px;font-size:13px;color:#f0f0f0">Warp</div><div class="a" style="left:735px;top:94px;width:0;height:0;border-left:3px solid transparent;border-right:3px solid transparent;border-top:3px solid #ddd"></div><svg style="left:754px;top:87px" width="16" height="15" viewBox="0 0 16 15" ><rect x=".5" y=".5" width="15" height="14" rx="1.5" fill="#fff" stroke="#222"/><circle cx="4.3" cy="11" r="1.5" fill="#000"/><circle cx="8" cy="7.5" r="1.5" fill="#000"/><circle cx="11.7" cy="4" r="1.5" fill="#000"/></svg><svg style="left:776px;top:87px" width="15" height="14" viewBox="0 0 15 14" ><path d="M0.8 0.8 H13.2 V4.2 H12 Q11.5 2.6 9.2 2.6 H8.6 V10.8 Q8.6 11.6 10 11.6 V12.6 H4 V11.6 Q5.4 11.6 5.4 10.8 V2.6 H4.8 Q2.5 2.6 2 4.2 H0.8Z" fill="#777" stroke="#111" stroke-width="1" /></svg><div class="a t " style="left:796px;top:88px;font-size:13px;color:#f0f0f0">Format</div><div class="a" style="left:3px;top:135px;width:115px;height:115px;border:1px solid #8e929b;background:#fff"></div><div class="a " style="left:7px;top:137px;width:109px;height:110px;background:#f0f0f0"></div><div class="a" style="left:72px;top:117px;width:16px;height:19px;border:1px solid #8e929b;border-bottom:none;background:linear-gradient(180deg,#f2f2f2 0,#ebebeb 45%,#dcdcdc 50%,#cfcfcf 100%);overflow:hidden"><div class="a t tab" style="left:3px;top:5px">Hi</div></div><div class="a" style="left:3px;top:115px;width:70px;height:21px;border:1px solid #8e929b;border-bottom:none;background:#fff"></div><div class="a t tab" style="left:11px;top:121px;">Navigator</div><div class="a " style="left:4px;top:134px;width:68px;height:2px;background:#fff"></div><div class="a" style="left:87px;top:117px;width:16px;height:16px;border:1px solid #a4a7ad;background:linear-gradient(180deg,#f4f4f4 0,#ececec 45%,#dedede 55%,#d0d0d0 100%)"></div><div class="a" style="left:93px;top:122px;width:0;height:0;border-top:3px solid transparent;border-bottom:3px solid transparent;border-right:3px solid #4a78b0"></div><div class="a" style="left:103px;top:117px;width:16px;height:16px;border:1px solid #a4a7ad;background:linear-gradient(180deg,#f4f4f4 0,#ececec 45%,#dedede 55%,#d0d0d0 100%)"></div><div class="a" style="left:110px;top:122px;width:0;height:0;border-top:3px solid transparent;border-bottom:3px solid transparent;border-left:3px solid #4a78b0"></div><div class="a " style="left:10px;top:140px;width:103px;height:70px;background:#5f5f5f"></div><svg style="left:14px;top:218px" width="16" height="16" viewBox="0 0 16 16" ><ellipse cx="8" cy="14.5" rx="6" ry="1.2" fill="#ccc"/><path d="M9.5 9.5 L14.5 14.5" stroke="#888" stroke-width="2.2"/><circle cx="6.3" cy="6.3" r="5" fill="#e8f0f8" stroke="#3a78d0" stroke-width="1.4"/></svg><div class="a " style="left:50px;top:222px;width:54px;height:1px;background:#9a9a9a"></div><div class="a " style="left:50px;top:223px;width:54px;height:4px;background:#e2e2e2"></div><svg style="left:41px;top:218px" width="10" height="15" viewBox="0 0 10 15" ><path d="M0.5 0.5 H9.5 V10 L5 14.5 L0.5 10Z" fill="#dfe9f5" stroke="#5a88c0"/><rect x="3.5" y="2.5" width="1" height="7" fill="#8ab0d8"/><rect x="5.5" y="2.5" width="1" height="7" fill="#8ab0d8"/></svg><div class="a" style="left:7px;top:260px;width:36px;height:20px;border:1px solid #8a8a8a;border-radius:3px;background:linear-gradient(180deg,#f2f2f2 0,#ebebeb 45%,#dddddd 50%,#d4d4d4 100%)"></div><div class="a" style="left:31px;top:269px;width:0;height:0;border-left:3.5px solid transparent;border-right:3.5px solid transparent;border-top:4px solid #000"></div><svg style="left:50px;top:265px" width="10" height="9" viewBox="0 0 10 9" ><path d="M0.8 0.8 L9.2 8.2 M9.2 0.8 L0.8 8.2" stroke="#1a1a1a" stroke-width="1.5"/></svg><svg style="left:71px;top:261px" width="16" height="17" viewBox="0 0 16 17" ><path d="M2.5 0.5 H11 L14 3.5 V15.5 H2.5Z" fill="#eef5fc" stroke="#8a929e" stroke-width=".9"/><path d="M11 0.5 V3.5 H14" fill="#fff" stroke="#9aa" stroke-width=".5"/><path d="M0.6 9.4 L4.6 5.2 V7.6 H9.6 V11.2 H4.6 V13.6Z" fill="#3a7ad0" stroke="#1a48a8" stroke-width=".9" stroke-linejoin="round"/><path d="M2.5 8.6 L4.6 6.6 M5 8.3 H9" stroke="#b8d4f4" stroke-width=".6"/></svg><svg style="left:96px;top:261px" width="16" height="17" viewBox="0 0 16 17" ><path d="M3.5 0.5 H12 L15 3.5 V15.5 H3.5Z" fill="#eef5fc" stroke="#8a929e" stroke-width=".9"/><path d="M12 0.5 V3.5 H15" fill="#fff" stroke="#9aa" stroke-width=".5"/><path d="M9.4 9.4 L5.4 5.2 V7.6 H0.6 V11.2 H5.4 V13.6Z" fill="#3a7ad0" stroke="#1a48a8" stroke-width=".9" stroke-linejoin="round"/><path d="M7.5 8.6 L5.4 6.6 M1 8.3 H5" stroke="#b8d4f4" stroke-width=".6"/></svg><div class="a" style="left:3px;top:312px;width:115px;height:423px;border:1px solid #8e929b;background:#fff"></div><div class="a " style="left:7px;top:315px;width:109px;height:417px;background:#f0f0f0"></div><div class="a" style="left:54px;top:294px;width:34px;height:19px;border:1px solid #8e929b;border-bottom:none;background:linear-gradient(180deg,#f2f2f2 0,#ebebeb 45%,#dcdcdc 50%,#cfcfcf 100%);overflow:hidden"><div class="a t tab" style="left:3px;top:5px">Layers</div></div><div class="a" style="left:3px;top:292px;width:52px;height:21px;border:1px solid #8e929b;border-bottom:none;background:#fff"></div><div class="a t tab" style="left:10px;top:298px;">Images</div><div class="a " style="left:4px;top:311px;width:50px;height:2px;background:#fff"></div><div class="a" style="left:87px;top:294px;width:16px;height:16px;border:1px solid #a4a7ad;background:linear-gradient(180deg,#f4f4f4 0,#ececec 45%,#dedede 55%,#d0d0d0 100%)"></div><div class="a" style="left:93px;top:299px;width:0;height:0;border-top:3px solid transparent;border-bottom:3px solid transparent;border-right:3px solid #4a78b0"></div><div class="a" style="left:103px;top:294px;width:16px;height:16px;border:1px solid #a4a7ad;background:linear-gradient(180deg,#f4f4f4 0,#ececec 45%,#dedede 55%,#d0d0d0 100%)"></div><div class="a" style="left:110px;top:299px;width:0;height:0;border-top:3px solid transparent;border-bottom:3px solid transparent;border-left:3px solid #4a78b0"></div><div class="a " style="left:7px;top:314px;width:109px;height:418px;background:#5f5f5f"></div><div class="a " style="left:124px;top:115px;width:811px;height:621px;background:#fff;border-top:1px solid #a0a0a0;border-left:1px solid #a0a0a0;box-shadow:inset 1px 1px 0 #7a7a7a"></div><div class="a t " style="left:128px;top:119px;font-size:12px;color:#000">px</div><div class="a " style="left:148px;top:137px;width:785px;height:597px;background:#2169b7"></div><div class="a " style="left:145px;top:136px;width:788px;height:1px;background:#000"></div><div class="a " style="left:145px;top:117px;width:1px;height:20px;background:#000"></div><div class="a " style="left:147px;top:136px;width:1px;height:598px;background:#000"></div><svg style="left:0;top:0" width="1240" height="761" shape-rendering="crispEdges"><rect x="155" y="117" width="1" height="6" fill="#000"/><rect x="165" y="117" width="1" height="6" fill="#000"/><rect x="175" y="117" width="1" height="6" fill="#000"/><rect x="185" y="117" width="1" height="6" fill="#000"/><rect x="195" y="117" width="1" height="11" fill="#000"/><rect x="205" y="117" width="1" height="6" fill="#000"/><rect x="215" y="117" width="1" height="6" fill="#000"/><rect x="225" y="117" width="1" height="6" fill="#000"/><rect x="235" y="117" width="1" height="6" fill="#000"/><rect x="245" y="117" width="1" height="19" fill="#000"/><rect x="255" y="117" width="1" height="6" fill="#000"/><rect x="265" y="117" width="1" height="6" fill="#000"/><rect x="275" y="117" width="1" height="6" fill="#000"/><rect x="285" y="117" width="1" height="6" fill="#000"/><rect x="295" y="117" width="1" height="11" fill="#000"/><rect x="305" y="117" width="1" height="6" fill="#000"/><rect x="315" y="117" width="1" height="6" fill="#000"/><rect x="325" y="117" width="1" height="6" fill="#000"/><rect x="335" y="117" width="1" height="6" fill="#000"/><rect x="345" y="117" width="1" height="19" fill="#000"/><rect x="355" y="117" width="1" height="6" fill="#000"/><rect x="365" y="117" width="1" height="6" fill="#000"/><rect x="375" y="117" width="1" height="6" fill="#000"/><rect x="385" y="117" width="1" height="6" fill="#000"/><rect x="395" y="117" width="1" height="11" fill="#000"/><rect x="405" y="117" width="1" height="6" fill="#000"/><rect x="415" y="117" width="1" height="6" fill="#000"/><rect x="425" y="117" width="1" height="6" fill="#000"/><rect x="435" y="117" width="1" height="6" fill="#000"/><rect x="445" y="117" width="1" height="19" fill="#000"/><rect x="455" y="117" width="1" height="6" fill="#000"/><rect x="465" y="117" width="1" height="6" fill="#000"/><rect x="475" y="117" width="1" height="6" fill="#000"/><rect x="485" y="117" width="1" height="6" fill="#000"/><rect x="495" y="117" width="1" height="11" fill="#000"/><rect x="505" y="117" width="1" height="6" fill="#000"/><rect x="515" y="117" width="1" height="6" fill="#000"/><rect x="525" y="117" width="1" height="6" fill="#000"/><rect x="535" y="117" width="1" height="6" fill="#000"/><rect x="545" y="117" width="1" height="19" fill="#000"/><rect x="555" y="117" width="1" height="6" fill="#000"/><rect x="565" y="117" width="1" height="6" fill="#000"/><rect x="575" y="117" width="1" height="6" fill="#000"/><rect x="585" y="117" width="1" height="6" fill="#000"/><rect x="595" y="117" width="1" height="11" fill="#000"/><rect x="605" y="117" width="1" height="6" fill="#000"/><rect x="615" y="117" width="1" height="6" fill="#000"/><rect x="625" y="117" width="1" height="6" fill="#000"/><rect x="635" y="117" width="1" height="6" fill="#000"/><rect x="645" y="117" width="1" height="19" fill="#000"/><rect x="655" y="117" width="1" height="6" fill="#000"/><rect x="665" y="117" width="1" height="6" fill="#000"/><rect x="675" y="117" width="1" height="6" fill="#000"/><rect x="685" y="117" width="1" height="6" fill="#000"/><rect x="695" y="117" width="1" height="11" fill="#000"/><rect x="705" y="117" width="1" height="6" fill="#000"/><rect x="715" y="117" width="1" height="6" fill="#000"/><rect x="725" y="117" width="1" height="6" fill="#000"/><rect x="735" y="117" width="1" height="6" fill="#000"/><rect x="745" y="117" width="1" height="19" fill="#000"/><rect x="755" y="117" width="1" height="6" fill="#000"/><rect x="765" y="117" width="1" height="6" fill="#000"/><rect x="775" y="117" width="1" height="6" fill="#000"/><rect x="785" y="117" width="1" height="6" fill="#000"/><rect x="795" y="117" width="1" height="11" fill="#000"/><rect x="805" y="117" width="1" height="6" fill="#000"/><rect x="815" y="117" width="1" height="6" fill="#000"/><rect x="825" y="117" width="1" height="6" fill="#000"/><rect x="835" y="117" width="1" height="6" fill="#000"/><rect x="845" y="117" width="1" height="19" fill="#000"/><rect x="855" y="117" width="1" height="6" fill="#000"/><rect x="865" y="117" width="1" height="6" fill="#000"/><rect x="875" y="117" width="1" height="6" fill="#000"/><rect x="885" y="117" width="1" height="6" fill="#000"/><rect x="895" y="117" width="1" height="11" fill="#000"/><rect x="905" y="117" width="1" height="6" fill="#000"/><rect x="915" y="117" width="1" height="6" fill="#000"/><rect x="925" y="117" width="1" height="6" fill="#000"/></svg><div class="a t " style="left:248px;top:125px;font-size:10px;color:#000;transform:scaleX(.84);transform-origin:0 0">100</div><div class="a t " style="left:348px;top:125px;font-size:10px;color:#000;transform:scaleX(.84);transform-origin:0 0">200</div><div class="a t " style="left:448px;top:125px;font-size:10px;color:#000;transform:scaleX(.84);transform-origin:0 0">300</div><div class="a t " style="left:548px;top:125px;font-size:10px;color:#000;transform:scaleX(.84);transform-origin:0 0">400</div><div class="a t " style="left:648px;top:125px;font-size:10px;color:#000;transform:scaleX(.84);transform-origin:0 0">500</div><div class="a t " style="left:748px;top:125px;font-size:10px;color:#000;transform:scaleX(.84);transform-origin:0 0">600</div><div class="a t " style="left:848px;top:125px;font-size:10px;color:#000;transform:scaleX(.84);transform-origin:0 0">700</div><svg style="left:0;top:0" width="1240" height="761" shape-rendering="crispEdges"><rect x="126" y="146" width="6" height="1" fill="#000"/><rect x="126" y="156" width="6" height="1" fill="#000"/><rect x="126" y="166" width="6" height="1" fill="#000"/><rect x="126" y="176" width="6" height="1" fill="#000"/><rect x="126" y="186" width="12" height="1" fill="#000"/><rect x="126" y="196" width="6" height="1" fill="#000"/><rect x="126" y="206" width="6" height="1" fill="#000"/><rect x="126" y="216" width="6" height="1" fill="#000"/><rect x="126" y="226" width="6" height="1" fill="#000"/><rect x="126" y="236" width="21" height="1" fill="#000"/><rect x="126" y="246" width="6" height="1" fill="#000"/><rect x="126" y="256" width="6" height="1" fill="#000"/><rect x="126" y="266" width="6" height="1" fill="#000"/><rect x="126" y="276" width="6" height="1" fill="#000"/><rect x="126" y="286" width="12" height="1" fill="#000"/><rect x="126" y="296" width="6" height="1" fill="#000"/><rect x="126" y="306" width="6" height="1" fill="#000"/><rect x="126" y="316" width="6" height="1" fill="#000"/><rect x="126" y="326" width="6" height="1" fill="#000"/><rect x="126" y="336" width="21" height="1" fill="#000"/><rect x="126" y="346" width="6" height="1" fill="#000"/><rect x="126" y="356" width="6" height="1" fill="#000"/><rect x="126" y="366" width="6" height="1" fill="#000"/><rect x="126" y="376" width="6" height="1" fill="#000"/><rect x="126" y="386" width="12" height="1" fill="#000"/><rect x="126" y="396" width="6" height="1" fill="#000"/><rect x="126" y="406" width="6" height="1" fill="#000"/><rect x="126" y="416" width="6" height="1" fill="#000"/><rect x="126" y="426" width="6" height="1" fill="#000"/><rect x="126" y="436" width="21" height="1" fill="#000"/><rect x="126" y="446" width="6" height="1" fill="#000"/><rect x="126" y="456" width="6" height="1" fill="#000"/><rect x="126" y="466" width="6" height="1" fill="#000"/><rect x="126" y="476" width="6" height="1" fill="#000"/><rect x="126" y="486" width="12" height="1" fill="#000"/><rect x="126" y="496" width="6" height="1" fill="#000"/><rect x="126" y="506" width="6" height="1" fill="#000"/><rect x="126" y="516" width="6" height="1" fill="#000"/><rect x="126" y="526" width="6" height="1" fill="#000"/><rect x="126" y="536" width="21" height="1" fill="#000"/><rect x="126" y="546" width="6" height="1" fill="#000"/><rect x="126" y="556" width="6" height="1" fill="#000"/><rect x="126" y="566" width="6" height="1" fill="#000"/><rect x="126" y="576" width="6" height="1" fill="#000"/><rect x="126" y="586" width="12" height="1" fill="#000"/><rect x="126" y="596" width="6" height="1" fill="#000"/><rect x="126" y="606" width="6" height="1" fill="#000"/><rect x="126" y="616" width="6" height="1" fill="#000"/><rect x="126" y="626" width="6" height="1" fill="#000"/><rect x="126" y="636" width="21" height="1" fill="#000"/><rect x="126" y="646" width="6" height="1" fill="#000"/><rect x="126" y="656" width="6" height="1" fill="#000"/><rect x="126" y="666" width="6" height="1" fill="#000"/><rect x="126" y="676" width="6" height="1" fill="#000"/><rect x="126" y="686" width="12" height="1" fill="#000"/><rect x="126" y="696" width="6" height="1" fill="#000"/><rect x="126" y="706" width="6" height="1" fill="#000"/><rect x="126" y="716" width="6" height="1" fill="#000"/></svg><div class="a t " style="left:137px;top:139px;font-size:10px;color:#000;transform:scaleX(.84);transform-origin:0 0">0</div><div class="a t " style="left:137px;top:239px;font-size:10px;color:#000;transform:scaleX(.84);transform-origin:0 0">1</div><div class="a t " style="left:137px;top:249px;font-size:10px;color:#000;transform:scaleX(.84);transform-origin:0 0">0</div><div class="a t " style="left:137px;top:259px;font-size:10px;color:#000;transform:scaleX(.84);transform-origin:0 0">0</div><div class="a t " style="left:137px;top:339px;font-size:10px;color:#000;transform:scaleX(.84);transform-origin:0 0">2</div><div class="a t " style="left:137px;top:349px;font-size:10px;color:#000;transform:scaleX(.84);transform-origin:0 0">0</div><div class="a t " style="left:137px;top:359px;font-size:10px;color:#000;transform:scaleX(.84);transform-origin:0 0">0</div><div class="a t " style="left:137px;top:439px;font-size:10px;color:#000;transform:scaleX(.84);transform-origin:0 0">3</div><div class="a t " style="left:137px;top:449px;font-size:10px;color:#000;transform:scaleX(.84);transform-origin:0 0">0</div><div class="a t " style="left:137px;top:459px;font-size:10px;color:#000;transform:scaleX(.84);transform-origin:0 0">0</div><div class="a t " style="left:137px;top:539px;font-size:10px;color:#000;transform:scaleX(.84);transform-origin:0 0">4</div><div class="a t " style="left:137px;top:549px;font-size:10px;color:#000;transform:scaleX(.84);transform-origin:0 0">0</div><div class="a t " style="left:137px;top:559px;font-size:10px;color:#000;transform:scaleX(.84);transform-origin:0 0">0</div><div class="a t " style="left:137px;top:639px;font-size:10px;color:#000;transform:scaleX(.84);transform-origin:0 0">5</div><div class="a t " style="left:137px;top:649px;font-size:10px;color:#000;transform:scaleX(.84);transform-origin:0 0">0</div><div class="a t " style="left:137px;top:659px;font-size:10px;color:#000;transform:scaleX(.84);transform-origin:0 0">0</div><div class="a" style="left:935px;top:135px;width:300px;height:600px;border:1px solid #8e929b;background:#f0f0f0;box-shadow:inset 3px 1px 0 #fff,inset -1px -2px 0 #fff"></div><div class="a " style="left:936px;top:136px;width:298px;height:1px;background:#fff"></div><div class="a" style="left:986px;top:117px;width:53px;height:19px;border:1px solid #8e929b;border-bottom:none;background:linear-gradient(180deg,#f2f2f2 0,#ebebeb 45%,#dcdcdc 50%,#cfcfcf 100%);overflow:hidden"><div class="a t tab" style="left:3px;top:5px">Effects</div></div><div class="a" style="left:1039px;top:117px;width:58px;height:19px;border:1px solid #8e929b;border-bottom:none;background:linear-gradient(180deg,#f2f2f2 0,#ebebeb 45%,#dcdcdc 50%,#cfcfcf 100%);overflow:hidden"><div class="a t tab" style="left:5px;top:5px">Text Art</div></div><div class="a" style="left:935px;top:115px;width:52px;height:21px;border:1px solid #8e929b;border-bottom:none;background:#fff"></div><div class="a t tab" style="left:943px;top:121px;">Tools</div><div class="a " style="left:936px;top:134px;width:50px;height:3px;background:#fff"></div><div class="a" style="left:943px;top:163px;width:284px;height:148px;border:1px solid #8e929b;background:#fff"></div><div class="a" style="left:994px;top:144px;width:47px;height:20px;border:1px solid #8e929b;border-bottom:none;background:linear-gradient(180deg,#f2f2f2 0,#ebebeb 45%,#dcdcdc 50%,#d0d0d0 100%)"></div><div class="a" style="left:1041px;top:144px;width:48px;height:20px;border:1px solid #8e929b;border-bottom:none;background:linear-gradient(180deg,#f2f2f2 0,#ebebeb 45%,#dcdcdc 50%,#d0d0d0 100%)"></div><div class="a" style="left:1089px;top:144px;width:47px;height:20px;border:1px solid #8e929b;border-bottom:none;background:linear-gradient(180deg,#f2f2f2 0,#ebebeb 45%,#dcdcdc 50%,#d0d0d0 100%)"></div><div class="a" style="left:943px;top:142px;width:52px;height:22px;border:1px solid #8e929b;border-bottom:none;background:#fff"></div><div class="a " style="left:944px;top:162px;width:50px;height:2px;background:#fff"></div><svg style="left:951px;top:144px" width="17" height="16" viewBox="0 0 17 16" ><rect x="6" y="5.5" width="10" height="9.5" fill="#fff" stroke="#b8aa98" stroke-width="1"/><rect x="0.5" y="0.5" width="9" height="8.5" fill="#000" stroke="#b8aa98" stroke-width="1"/><rect x="1" y="1" width="8" height="7.5" fill="#000"/></svg><svg style="left:1000px;top:146px" width="16" height="16" viewBox="0 0 16 16" ><defs><clipPath id="c1"><rect width="16" height="16"/></clipPath></defs><g clip-path="url(#c1)"><g transform="rotate(-45 8 8)"><rect x="-6" y="-6" width="5" height="28" fill="#60d070"/><rect x="-1" y="-6" width="3" height="28" fill="#3a4a60"/><rect x="2" y="-6" width="3" height="28" fill="#202838"/><rect x="5" y="-6" width="5" height="28" fill="#e8283a"/><rect x="10" y="-6" width="4" height="28" fill="#40c8d8"/><rect x="14" y="-6" width="6" height="28" fill="#9a4a7a"/></g></g></svg><svg style="left:1047px;top:146px" width="16" height="16" viewBox="0 0 16 16" ><rect x="0" y="0" width="4" height="4" fill="#40b8c0"/><rect x="0" y="4" width="4" height="4" fill="#6a0a6a"/><rect x="0" y="8" width="4" height="4" fill="#d09060"/><rect x="0" y="12" width="4" height="4" fill="#6a0a6a"/><rect x="4" y="0" width="4" height="4" fill="#6a0a6a"/><rect x="4" y="4" width="4" height="4" fill="#40b8c0"/><rect x="4" y="8" width="4" height="4" fill="#6a0a6a"/><rect x="4" y="12" width="4" height="4" fill="#d09060"/><rect x="8" y="0" width="4" height="4" fill="#d09060"/><rect x="8" y="4" width="4" height="4" fill="#6a0a6a"/><rect x="8" y="8" width="4" height="4" fill="#40b8c0"/><rect x="8" y="12" width="4" height="4" fill="#6a0a6a"/><rect x="12" y="0" width="4" height="4" fill="#6a0a6a"/><rect x="12" y="4" width="4" height="4" fill="#d09060"/><rect x="12" y="8" width="4" height="4" fill="#6a0a6a"/><rect x="12" y="12" width="4" height="4" fill="#40b8c0"/></svg><svg style="left:1096px;top:147px" width="14" height="14" viewBox="0 0 14 14" ><rect x=".5" y=".5" width="13" height="13" fill="#f0f6fc" stroke="#1a48a8"/><path d="M1 13 L6 6.5 L13 12.5 V13Z" fill="#90b8e0"/><path d="M1 12 L6 6.5 L13 12" fill="none" stroke="#1a2a40" stroke-width="1"/><circle cx="9.5" cy="4.5" r="1.8" fill="#f06030" stroke="#fff" stroke-width=".6"/></svg><div class="a " style="left:983px;top:197px;width:41px;height:37px;background:#fff;border:1px solid #505050"></div><div class="a " style="left:957px;top:174px;width:41px;height:37px;background:#000"></div><svg style="left:1007px;top:173px" width="16" height="16" viewBox="0 0 16 16" ><path d="M1 4.4 L4.8 0.6 V8.2Z" fill="#000"/><rect x="4.5" y="3.9" width="4.5" height="1.1" fill="#000"/><path d="M8.6 4.2 L10.6 6.2" stroke="#000" stroke-width="1.1"/><rect x="9.9" y="6" width="1.1" height="5" fill="#000"/><path d="M6.8 10.8 H14.2 L10.5 14.4Z" fill="#000"/></svg><svg style="left:958px;top:217px" width="14" height="14" viewBox="0 0 14 14" ><rect x="4.5" y="4.5" width="9" height="9" fill="#fff" stroke="#000"/><rect x=".5" y=".5" width="9" height="9" fill="#fff" stroke="#000"/><rect x="2" y="2" width="6" height="6" fill="#000"/></svg><div class="a" style="left:957px;top:239px;width:67px;height:22px;border:1px solid #c8c8c8;border-bottom-color:#cfe0f0;border-radius:2px;background:#fff"></div><div class="a t tab" style="left:962px;top:244px;">Solid</div><div class="a" style="left:1012px;top:249px;width:0;height:0;border-left:4px solid transparent;border-right:4px solid transparent;border-top:4px solid #000"></div><div class="a" style="left:957px;top:271px;width:28px;height:26px;border:1px solid #adadad;background:#efefef"></div><div class="a" style="left:993px;top:271px;width:28px;height:26px;border:1px solid #adadad;background:#efefef"></div><svg style="left:963px;top:276px" width="17" height="16" viewBox="0 0 17 16" ><path d="M1 7 C1 2.5 6 1 10 1.5 C14.5 2 16.5 5 15.5 8 C15 10 12.5 9.5 11.5 10.5 C10.5 12 12 14 9 14.5 C4 15 1 11 1 7Z" fill="#f0c890" stroke="#b88a50" stroke-width=".7"/><circle cx="5" cy="5" r="1.5" fill="#e02828"/><circle cx="9" cy="4" r="1.4" fill="#f0d020"/><circle cx="12.5" cy="6" r="1.4" fill="#3a7ae0"/><circle cx="5" cy="9.5" r="1.4" fill="#fff"/></svg><svg style="left:999px;top:274px" width="18" height="20" viewBox="0 0 18 20" ><rect x="0.5" y="0.5" width="9" height="7" fill="#e8f0f8" stroke="#5a88c0" stroke-width=".8"/><rect x="2" y="2" width="6" height="3" fill="#3a78c8"/><g transform="translate(2 4)"><path d="M1 7 C1 2.5 6 1 10 1.5 C14.5 2 16.5 5 15.5 8 C15 10 12.5 9.5 11.5 10.5 C10.5 12 12 14 9 14.5 C4 15 1 11 1 7Z" fill="#f0c890" stroke="#b88a50" stroke-width=".7"/><circle cx="5" cy="5" r="1.5" fill="#e02828"/><circle cx="9" cy="4" r="1.4" fill="#f0d020"/><circle cx="12.5" cy="6" r="1.4" fill="#3a7ae0"/><circle cx="5" cy="9.5" r="1.4" fill="#fff"/></g></svg><div class="a " style="left:1039px;top:175px;width:18px;height:16px;background:#ff8000;border:1px solid #000;box-shadow:inset 0 0 0 1px rgba(0,0,0,.45)"></div><div class="a " style="left:1065px;top:175px;width:18px;height:16px;background:#ffffff;border:1px solid #000;box-shadow:inset 0 0 0 1px rgba(0,0,0,.45)"></div><div class="a " style="left:1085px;top:175px;width:18px;height:16px;background:#ff8080;border:1px solid #000;box-shadow:inset 0 0 0 1px rgba(0,0,0,.45)"></div><div class="a " style="left:1106px;top:175px;width:18px;height:16px;background:#ffc080;border:1px solid #000;box-shadow:inset 0 0 0 1px rgba(0,0,0,.45)"></div><div class="a " style="left:1126px;top:175px;width:18px;height:16px;background:#ffff80;border:1px solid #000;box-shadow:inset 0 0 0 1px rgba(0,0,0,.45)"></div><div class="a " style="left:1147px;top:175px;width:18px;height:16px;background:#80ff80;border:1px solid #000;box-shadow:inset 0 0 0 1px rgba(0,0,0,.45)"></div><div class="a " style="left:1167px;top:175px;width:18px;height:16px;background:#00ffff;border:1px solid #000;box-shadow:inset 0 0 0 1px rgba(0,0,0,.45)"></div><div class="a " style="left:1188px;top:175px;width:18px;height:16px;background:#ff80ff;border:1px solid #000;box-shadow:inset 0 0 0 1px rgba(0,0,0,.45)"></div><div class="a " style="left:1039px;top:193px;width:18px;height:16px;background:#ff8000;border:1px solid #000;box-shadow:inset 0 0 0 1px rgba(0,0,0,.45)"></div><div class="a " style="left:1065px;top:193px;width:18px;height:16px;background:#c0c0c0;border:1px solid #000;box-shadow:inset 0 0 0 1px rgba(0,0,0,.45)"></div><div class="a " style="left:1085px;top:193px;width:18px;height:16px;background:#ff0000;border:1px solid #000;box-shadow:inset 0 0 0 1px rgba(0,0,0,.45)"></div><div class="a " style="left:1106px;top:193px;width:18px;height:16px;background:#ff8000;border:1px solid #000;box-shadow:inset 0 0 0 1px rgba(0,0,0,.45)"></div><div class="a " style="left:1126px;top:193px;width:18px;height:16px;background:#ffff00;border:1px solid #000;box-shadow:inset 0 0 0 1px rgba(0,0,0,.45)"></div><div class="a " style="left:1147px;top:193px;width:18px;height:16px;background:#00ff00;border:1px solid #000;box-shadow:inset 0 0 0 1px rgba(0,0,0,.45)"></div><div class="a " style="left:1167px;top:193px;width:18px;height:16px;background:#0080ff;border:1px solid #000;box-shadow:inset 0 0 0 1px rgba(0,0,0,.45)"></div><div class="a " style="left:1188px;top:193px;width:18px;height:16px;background:#ff00ff;border:1px solid #000;box-shadow:inset 0 0 0 1px rgba(0,0,0,.45)"></div><div class="a " style="left:1039px;top:212px;width:18px;height:16px;background:#ff8000;border:1px solid #000;box-shadow:inset 0 0 0 1px rgba(0,0,0,.45)"></div><div class="a " style="left:1065px;top:212px;width:18px;height:16px;background:#808080;border:1px solid #000;box-shadow:inset 0 0 0 1px rgba(0,0,0,.45)"></div><div class="a " style="left:1085px;top:212px;width:18px;height:16px;background:#c00000;border:1px solid #000;box-shadow:inset 0 0 0 1px rgba(0,0,0,.45)"></div><div class="a " style="left:1106px;top:212px;width:18px;height:16px;background:#c04000;border:1px solid #000;box-shadow:inset 0 0 0 1px rgba(0,0,0,.45)"></div><div class="a " style="left:1126px;top:212px;width:18px;height:16px;background:#c0c000;border:1px solid #000;box-shadow:inset 0 0 0 1px rgba(0,0,0,.45)"></div><div class="a " style="left:1147px;top:212px;width:18px;height:16px;background:#00c000;border:1px solid #000;box-shadow:inset 0 0 0 1px rgba(0,0,0,.45)"></div><div class="a " style="left:1167px;top:212px;width:18px;height:16px;background:#0000ff;border:1px solid #000;box-shadow:inset 0 0 0 1px rgba(0,0,0,.45)"></div><div class="a " style="left:1188px;top:212px;width:18px;height:16px;background:#c000c0;border:1px solid #000;box-shadow:inset 0 0 0 1px rgba(0,0,0,.45)"></div><div class="a " style="left:1039px;top:230px;width:18px;height:16px;background:#ff8000;border:1px solid #000;box-shadow:inset 0 0 0 1px rgba(0,0,0,.45)"></div><div class="a " style="left:1065px;top:230px;width:18px;height:16px;background:#404040;border:1px solid #000;box-shadow:inset 0 0 0 1px rgba(0,0,0,.45)"></div><div class="a " style="left:1085px;top:230px;width:18px;height:16px;background:#800000;border:1px solid #000;box-shadow:inset 0 0 0 1px rgba(0,0,0,.45)"></div><div class="a " style="left:1106px;top:230px;width:18px;height:16px;background:#804020;border:1px solid #000;box-shadow:inset 0 0 0 1px rgba(0,0,0,.45)"></div><div class="a " style="left:1126px;top:230px;width:18px;height:16px;background:#808000;border:1px solid #000;box-shadow:inset 0 0 0 1px rgba(0,0,0,.45)"></div><div class="a " style="left:1147px;top:230px;width:18px;height:16px;background:#008000;border:1px solid #000;box-shadow:inset 0 0 0 1px rgba(0,0,0,.45)"></div><div class="a " style="left:1167px;top:230px;width:18px;height:16px;background:#000080;border:1px solid #000;box-shadow:inset 0 0 0 1px rgba(0,0,0,.45)"></div><div class="a " style="left:1188px;top:230px;width:18px;height:16px;background:#800080;border:1px solid #000;box-shadow:inset 0 0 0 1px rgba(0,0,0,.45)"></div><div class="a " style="left:1039px;top:249px;width:18px;height:16px;background:#ff8000;border:1px solid #000;box-shadow:inset 0 0 0 1px rgba(0,0,0,.45)"></div><div class="a " style="left:1065px;top:249px;width:18px;height:16px;background:#000000;border:1px solid #000;box-shadow:inset 0 0 0 1px rgba(0,0,0,.45)"></div><div class="a " style="left:1085px;top:249px;width:18px;height:16px;background:#400000;border:1px solid #000;box-shadow:inset 0 0 0 1px rgba(0,0,0,.45)"></div><div class="a " style="left:1106px;top:249px;width:18px;height:16px;background:#804040;border:1px solid #000;box-shadow:inset 0 0 0 1px rgba(0,0,0,.45)"></div><div class="a " style="left:1126px;top:249px;width:18px;height:16px;background:#404000;border:1px solid #000;box-shadow:inset 0 0 0 1px rgba(0,0,0,.45)"></div><div class="a " style="left:1147px;top:249px;width:18px;height:16px;background:#004000;border:1px solid #000;box-shadow:inset 0 0 0 1px rgba(0,0,0,.45)"></div><div class="a " style="left:1167px;top:249px;width:18px;height:16px;background:#000040;border:1px solid #000;box-shadow:inset 0 0 0 1px rgba(0,0,0,.45)"></div><div class="a " style="left:1188px;top:249px;width:18px;height:16px;background:#400040;border:1px solid #000;box-shadow:inset 0 0 0 1px rgba(0,0,0,.45)"></div><div class="a" style="left:1039px;top:272px;width:167px;height:25px;border:1px solid #000;box-shadow:inset 0 0 0 1px rgba(0,0,0,.45);background:linear-gradient(90deg,#66cde6 0,#66cde6 20%,#a8dcd8 20%,#a8dcd8 40%,#e2e4cc 40%,#e2e4cc 60%,#f08a34 60%,#f08a34 80%,#ff6a00 80%)"></div><div class="a " style="left:947px;top:317px;width:276px;height:111px;background:linear-gradient(180deg,#f7f7f7 0,#f7f7f7 80%,#f0f0f0 100%)"></div><svg style="left:951px;top:321px" width="15" height="15" viewBox="0 0 15 15" ><rect x=".7" y=".7" width="13.6" height="13.6" stroke="#222" stroke-width="1.3" stroke-dasharray="2.2 1.6" fill="#d8d8d8"/></svg><svg style="left:973px;top:320px" width="17" height="17" viewBox="0 0 17 17" ><path d="M1 1.5 L7 7.5 M7 1.5 L1 7.5" stroke="#d82828" stroke-width="2.2"/><rect x="8.2" y="9.7" width="7.6" height="6.6" stroke="#222" stroke-width="1.1" stroke-dasharray="1.6 1.2" fill="#d8d8d8"/></svg><svg style="left:997px;top:323px" width="15" height="11" viewBox="0 0 15 11" ><rect x=".7" y=".7" width="13.6" height="9.6" stroke="#222" stroke-width="1.3" stroke-dasharray="2.2 1.6" fill="#d8d8d8"/></svg><svg style="left:1020px;top:322px" width="15" height="12" viewBox="0 0 15 12" ><ellipse cx="7.5" cy="6" rx="6.7" ry="5.3" stroke="#222" stroke-width="1.2" stroke-dasharray="1.8 1.4" fill="#d8d8d8"/></svg><svg style="left:1045px;top:321px" width="12" height="14" viewBox="0 0 12 14" ><path d="M3 10 C0 8 0.5 2 5 1 C9 0 12 2 11 5 C10 8 6 8.5 3.5 8 L2.5 13" stroke="#222" stroke-width="1.1" stroke-dasharray="1.5 1.3" fill="#d8d8d8"/></svg><svg style="left:1065px;top:320px" width="17" height="17" viewBox="0 0 17 17" ><path d="M2 15 L13 4" stroke="#222" stroke-width="3"/><path d="M11 6 L13.5 3.5" stroke="#fff" stroke-width="2.6"/><path d="M5 3 L6 1 L7 3 L9 4 L7 5 L6 7 L5 5 L3 4Z" fill="#f0b020"/><circle cx="15" cy="9" r=".8" fill="#f0b020"/><circle cx="12" cy="1" r=".8" fill="#f0b020"/></svg><svg style="left:1090px;top:322px" width="12" height="13" viewBox="0 0 12 13" ><path d="M1 1 H11 M6 1 V12 M1 12 H11 M1 1 V3 M11 1 V3 M3.5 12 H8.5" stroke="#222" stroke-width="1.3" stroke-dasharray="1.4 1.2" fill="none"/></svg><svg style="left:1114px;top:322px" width="10" height="13" viewBox="0 0 10 13" ><path d="M5 0.8 C7.8 0.8 8.4 4.6 6.6 6.2 C9 7 9.2 10 9.2 12.2 H0.8 C0.8 10 1 7 3.4 6.2 C1.6 4.6 2.2 0.8 5 0.8Z" stroke="#222" stroke-width="1.1" stroke-dasharray="1.4 1.2" fill="#d8d8d8"/></svg><svg style="left:1135px;top:320px" width="16" height="16" viewBox="0 0 16 16" ><path d="M0.7 0.7 L15.3 15.3 H0.7Z" fill="#e0b070" stroke="#b07a38" stroke-width="1.2"/><path d="M4 7 L9 12 H4Z" fill="#fff" stroke="#b07a38" stroke-width=".8"/></svg><svg style="left:1158px;top:320px" width="13" height="16" viewBox="0 0 13 16" ><path d="M2 7 V3.5 Q2 2.5 3 2.5 Q4 2.5 4 3.5 V1.5 Q4 .5 5 .5 Q6 .5 6 1.5 V1 Q6 0 7 0 Q8 0 8 1 V2 Q8 1 9 1 Q10 1 10 2 V8 L11 6.5 Q12 5.5 12.8 6.5 L10 13 Q8.5 15.5 6 15.5 Q2 15.5 2 11Z" fill="#f0b878" stroke="#b87838" stroke-width=".8"/></svg><svg style="left:1180px;top:320px" width="16" height="16" viewBox="0 0 16 16" ><path d="M8 1 V15 M1 8 H15" stroke="#000" stroke-width="1.6"/><path d="M8 0 L5 3.5 H11Z M8 16 L5 12.5 H11Z M0 8 L3.5 5 V11Z M16 8 L12.5 5 V11Z" fill="#000"/></svg><svg style="left:951px;top:344px" width="16" height="15" viewBox="0 0 16 15" ><path d="M0.8 14.6 L1.4 12.2 L7.2 6.4 L9.1 8.3 L3.3 14.1Z" fill="#e6eef8" stroke="#6a7890" stroke-width=".8"/><path d="M6 5.8 L9.7 9.5" stroke="#c82828" stroke-width="2.2"/><path d="M8.4 7.1 L13.2 2.3" stroke="#a81818" stroke-width="4" stroke-linecap="round"/><path d="M8.4 7.1 L13.2 2.3" stroke="#e83a3a" stroke-width="2.8" stroke-linecap="round"/><path d="M10.5 4.2 L12.5 2.2" stroke="#f8a0a0" stroke-width=".8" stroke-linecap="round"/></svg><svg style="left:973px;top:344px" width="17" height="16" viewBox="0 0 17 16" ><path d="M0.8 14.6 L1.4 12.2 L7.2 6.4 L9.1 8.3 L3.3 14.1Z" fill="#e6eef8" stroke="#6a7890" stroke-width=".8"/><path d="M6 5.8 L9.7 9.5" stroke="#c82828" stroke-width="2.2"/><path d="M8.4 7.1 L13.2 2.3" stroke="#a81818" stroke-width="4" stroke-linecap="round"/><path d="M8.4 7.1 L13.2 2.3" stroke="#e83a3a" stroke-width="2.8" stroke-linecap="round"/><path d="M10.5 4.2 L12.5 2.2" stroke="#f8a0a0" stroke-width=".8" stroke-linecap="round"/><rect x="0" y="11" width="4" height="4" fill="#c02020"/><rect x="4" y="11" width="4" height="4" fill="#f08000"/><rect x="8" y="11" width="4" height="4" fill="#e8c000"/><rect x="12" y="11" width="4" height="4" fill="#808000"/></svg><svg style="left:996px;top:343px" width="17" height="16" viewBox="0 0 17 16" ><path d="M3 7 L9.5 1.5 L16 9 L10 15.5Z" fill="#d4dae2" stroke="#6a6e76" stroke-width="1"/><path d="M4.5 7.5 L10 13.5" stroke="#b8d0ec" stroke-width=".8"/><circle cx="9" cy="1.8" r="1.5" fill="none" stroke="#8a8a8a" stroke-width=".9"/><path d="M8.8 3.2 L7.6 8" stroke="#777" stroke-width="1.1"/><circle cx="7.5" cy="8" r=".9" fill="#777"/><path d="M3.2 6.6 Q0.6 7.6 1.2 13.6" stroke="#1a5ad0" stroke-width="2.2" fill="none"/></svg><svg style="left:1019px;top:343px" width="16" height="16" viewBox="0 0 16 16" ><path d="M1 15.5 L2 12.3 L13.3 1 L15.5 3.2 L4.2 14.5Z" fill="#f0c850" stroke="#a07a28" stroke-width=".6"/><path d="M13.3 1 L15.5 3.2 L14.4 4.3 L12.2 2.1Z" fill="#e83838"/><path d="M1 15.5 L1.5 13.5 L3 15Z" fill="#111"/></svg><svg style="left:1042px;top:343px" width="16" height="16" viewBox="0 0 16 16" ><path d="M1.5 1.5 L14.5 14.5" stroke="#222" stroke-width="2.2" stroke-linecap="round"/></svg><svg style="left:1064px;top:343px" width="17" height="16" viewBox="0 0 17 16" ><path d="M1 11 L9 2 Q11 0 13 2 L15.5 4.5 Q17 6.5 15 8.5 L8 15 Q6 16 4 14.5 L1.5 12Z" fill="#f4f4f4" stroke="#999" stroke-width=".8"/><path d="M9 2 Q11 0 13 2 L15.5 4.5 Q17 6.5 15 8.5 L13 10.5 L7 4.5Z" fill="#f0b0b0" stroke="#c88" stroke-width=".6"/></svg><div class="a" style="left:1082px;top:350px;width:0;height:0;border-left:3px solid transparent;border-right:3px solid transparent;border-top:3px solid #000"></div><svg style="left:1094px;top:344px" width="16" height="15" viewBox="0 0 16 15" ><circle cx="8" cy="3.5" r="3" fill="#b8b8b8" stroke="#888" stroke-width=".6"/><rect x="7" y="5" width="2" height="4" fill="#999"/><rect x=".5" y="8.5" width="15" height="4" rx="1.5" fill="#d08848" stroke="#9a5a20" stroke-width=".8"/><rect x="0.5" y="12" width="15" height="2.5" rx="1" fill="#a86428"/></svg><svg style="left:1116px;top:343px" width="17" height="16" viewBox="0 0 17 16" ><path d="M6 10 L16 0.5" stroke="#d02828" stroke-width="2.2"/><path d="M6 10 L4 12" stroke="#c0c0c0" stroke-width="2.2"/><path d="M3.5 12 Q1.5 12.5 1 15.5 Q3.5 15 4.5 13Z" fill="#2a6ad8"/></svg><div class="a" style="left:1134px;top:350px;width:0;height:0;border-left:3px solid transparent;border-right:3px solid transparent;border-top:3px solid #000"></div><svg style="left:1145px;top:343px" width="14" height="16" viewBox="0 0 14 16" ><path d="M4.5 0.5 H8.5 V5.5 L13 14 Q13.6 15.5 12 15.5 H2 Q0.4 15.5 1 14 L4.5 5.5Z" fill="#f4f8fc" stroke="#8ab0d4" stroke-width=".9"/><path d="M6 1 V6" stroke="#c8dcf0" stroke-width=".8"/><path d="M3.5 10 H6 L5.5 13.5 H2.2Z M6.8 10 H10 L11.5 13.5 H6.5Z" fill="#3cb850"/></svg><div class="a" style="left:1163px;top:350px;width:0;height:0;border-left:3px solid transparent;border-right:3px solid transparent;border-top:3px solid #000"></div><svg style="left:1175px;top:343px" width="15" height="16" viewBox="0 0 15 16" ><path d="M5 0.8 H12.5 Q14.5 1 14.5 4 V8.5 Q14.3 11.5 11 11.5 H8 L2.5 15.5 Q0.3 16 0.8 14.2 L4.5 9.5 Q1.5 8 2 5 L3 2.5Z" fill="#eef4fb" stroke="#2a5aa8" stroke-width=".9"/><path d="M3 2.5 L8 1 M3 5 L8 3.5 M3.5 7 L8 5.5" stroke="#7aa8d8" stroke-width=".7"/><path d="M12 2 Q13.5 5 12.5 9" stroke="#1a3a78" stroke-width="1" fill="none"/><path d="M4.5 9.5 Q7 9 8 11.5" stroke="#1a3a78" stroke-width=".8" fill="none"/></svg><div class="a" style="left:1192px;top:350px;width:0;height:0;border-left:3px solid transparent;border-right:3px solid transparent;border-top:3px solid #000"></div><svg style="left:951px;top:367px" width="14" height="15" viewBox="0 0 14 15" ><path d="M6 6 L13.5 14" stroke="#333" stroke-width="1.5"/><circle cx="5" cy="5" r="4.5" fill="#333"/><circle cx="4" cy="3.8" r="1.6" fill="#888"/></svg><div class="a" style="left:967px;top:373px;width:0;height:0;border-left:3px solid transparent;border-right:3px solid transparent;border-top:3px solid #000"></div><svg style="left:980px;top:367px" width="15" height="13" viewBox="0 0 15 13" ><rect x="0" y="0" width="8.5" height="7.5" fill="#e02030"/><path d="M14 4 V13 H5Z" fill="#1e6ad0"/></svg><svg style="left:1002px;top:366px" width="16" height="16" viewBox="0 0 16 16" ><rect x="0.0" y="0.0" width="3.3" height="3.3" fill="#50b8c0"/><rect x="0.0" y="3.2" width="3.3" height="3.3" fill="#5a0a5a"/><rect x="0.0" y="6.4" width="3.3" height="3.3" fill="#50b8c0"/><rect x="0.0" y="9.600000000000001" width="3.3" height="3.3" fill="#5a0a5a"/><rect x="0.0" y="12.8" width="3.3" height="3.3" fill="#50b8c0"/><rect x="3.2" y="0.0" width="3.3" height="3.3" fill="#5a0a5a"/><rect x="3.2" y="3.2" width="3.3" height="3.3" fill="#90b0b8"/><rect x="3.2" y="6.4" width="3.3" height="3.3" fill="#5a0a5a"/><rect x="3.2" y="9.600000000000001" width="3.3" height="3.3" fill="#90b0b8"/><rect x="3.2" y="12.8" width="3.3" height="3.3" fill="#5a0a5a"/><rect x="6.4" y="0.0" width="3.3" height="3.3" fill="#d09060"/><rect x="6.4" y="3.2" width="3.3" height="3.3" fill="#5a0a5a"/><rect x="6.4" y="6.4" width="3.3" height="3.3" fill="#d09060"/><rect x="6.4" y="9.600000000000001" width="3.3" height="3.3" fill="#5a0a5a"/><rect x="6.4" y="12.8" width="3.3" height="3.3" fill="#d09060"/><rect x="9.600000000000001" y="0.0" width="3.3" height="3.3" fill="#5a0a5a"/><rect x="9.600000000000001" y="3.2" width="3.3" height="3.3" fill="#c08888"/><rect x="9.600000000000001" y="6.4" width="3.3" height="3.3" fill="#5a0a5a"/><rect x="9.600000000000001" y="9.600000000000001" width="3.3" height="3.3" fill="#c08888"/><rect x="9.600000000000001" y="12.8" width="3.3" height="3.3" fill="#5a0a5a"/><rect x="12.8" y="0.0" width="3.3" height="3.3" fill="#50b8c0"/><rect x="12.8" y="3.2" width="3.3" height="3.3" fill="#5a0a5a"/><rect x="12.8" y="6.4" width="3.3" height="3.3" fill="#50b8c0"/><rect x="12.8" y="9.600000000000001" width="3.3" height="3.3" fill="#5a0a5a"/><rect x="12.8" y="12.8" width="3.3" height="3.3" fill="#50b8c0"/></svg><svg style="left:1026px;top:367px" width="15" height="15" viewBox="0 0 15 15" ><circle cx="7.5" cy="7.5" r="7.3" fill="#1a8af0"/><circle cx="7.8" cy="7.8" r="5" fill="#60e070"/><circle cx="8.5" cy="8.5" r="3" fill="#f00000"/></svg><svg style="left:1048px;top:366px" width="17" height="16" viewBox="0 0 17 16" ><path d="M0.5 15 L5 4 L9 15Z" fill="#90c0e8" stroke="#5a8ac0" stroke-width=".6"/><rect x="8.5" y="0.5" width="7" height="15" rx="2" fill="#e8c030" stroke="#a08010" stroke-width=".8"/><rect x="10" y="2" width="2" height="12" fill="#f8e080"/></svg><svg style="left:1072px;top:367px" width="14" height="14" viewBox="0 0 14 14" ><path d="M0.8 0.8 H13.2 V4.2 H12 Q11.5 2.6 9.2 2.6 H8.6 V10.8 Q8.6 11.6 10 11.6 V12.6 H4 V11.6 Q5.4 11.6 5.4 10.8 V2.6 H4.8 Q2.5 2.6 2 4.2 H0.8Z" fill="#7c7c7c" stroke="#222" stroke-width="1.3"/></svg><svg style="left:1094px;top:366px" width="16" height="16" viewBox="0 0 16 16" ><defs><clipPath id="c2"><rect width="16" height="16"/></clipPath></defs><g clip-path="url(#c2)"><g transform="rotate(-45 8 8)"><rect x="-6" y="-6" width="5" height="28" fill="#60d070"/><rect x="-1" y="-6" width="3" height="28" fill="#3a4a60"/><rect x="2" y="-6" width="3" height="28" fill="#202838"/><rect x="5" y="-6" width="5" height="28" fill="#e8283a"/><rect x="10" y="-6" width="4" height="28" fill="#40c8d8"/><rect x="14" y="-6" width="6" height="28" fill="#9a4a7a"/></g></g></svg><svg style="left:1116px;top:366px" width="16" height="16" viewBox="0 0 16 16" ><defs><linearGradient id="bg1" x1="0" x2="1"><stop offset="0" stop-color="#7ab8f8"/><stop offset=".5" stop-color="#4a80d8"/><stop offset="1" stop-color="#1a48a8"/></linearGradient></defs><rect width="16" height="16" fill="url(#bg1)"/></svg><div class="a" style="left:1134px;top:373px;width:0;height:0;border-left:3px solid transparent;border-right:3px solid transparent;border-top:3px solid #000"></div><svg style="left:1146px;top:366px" width="16" height="16" viewBox="0 0 16 16" ><rect width="16" height="16" rx="1.5" fill="#1a7ac8"/><path d="M0 10 L10 0 M3 16 L16 3 M10 16 L16 10" stroke="#fff" stroke-width="1.2"/></svg><svg style="left:1168px;top:366px" width="17" height="16" viewBox="0 0 17 16" ><path d="M9 8 L16 1" stroke="#d8a030" stroke-width="2.4"/><path d="M9 8 L8 9" stroke="#444" stroke-width="2"/><path d="M4.5 7 L5.8 10 L9 10.3 L6.6 12.4 L7.3 15.6 L4.5 14 L1.7 15.6 L2.4 12.4 L0 10.3 L3.2 10Z" fill="#3a80e0"/></svg><div class="a" style="left:1186px;top:373px;width:0;height:0;border-left:3px solid transparent;border-right:3px solid transparent;border-top:3px solid #000"></div><svg style="left:950px;top:390px" width="15" height="14" viewBox="0 0 15 14" ><rect x=".5" y=".5" width="14" height="13" fill="#eef4fa" stroke="#1a48a8"/><circle cx="7.5" cy="5" r="3" fill="#666"/><path d="M2.5 13 Q3 8.5 7.5 8.5 Q12 8.5 12.5 13Z" fill="#e86820"/></svg><div class="a" style="left:967px;top:397px;width:0;height:0;border-left:3px solid transparent;border-right:3px solid transparent;border-top:3px solid #000"></div><svg style="left:978px;top:390px" width="17" height="15" viewBox="0 0 17 15" ><path d="M6 1.5 Q10 0.5 14 1.5 Q10 4 9.5 7 Q10.5 11 14 13.5 H2 Q1.5 10 2 7 Q3 3 6 1.5Z" fill="#8ab4e8" stroke="#222" stroke-width=".8"/><g fill="#fff" stroke="#000" stroke-width=".9"><rect x="4.5" y="0" width="2.6" height="2.6" rx="1"/><rect x="12.5" y="0" width="2.6" height="2.6" rx="1"/><rect x="8.2" y="5.7" width="2.6" height="2.6" rx="1"/><rect x="0.5" y="5.7" width="2.6" height="2.6" rx="1"/><rect x="0.5" y="12" width="2.6" height="2.6" rx="1"/><rect x="12.5" y="12" width="2.6" height="2.6" rx="1"/></g></svg><div class="a" style="left:996px;top:397px;width:0;height:0;border-left:3px solid transparent;border-right:3px solid transparent;border-top:3px solid #000"></div><svg style="left:1007px;top:390px" width="16" height="15" viewBox="0 0 16 15" ><path d="M8 0.5 L15.5 6 L12.6 14.8 H3.4 L0.5 6Z" fill="#0a78c8"/></svg><div class="a" style="left:1025px;top:397px;width:0;height:0;border-left:3px solid transparent;border-right:3px solid transparent;border-top:3px solid #000"></div><div class="a " style="left:102px;top:738px;width:1px;height:20px;background:#d0cdca"></div><div class="a " style="left:212px;top:738px;width:1px;height:20px;background:#d0cdca"></div><div class="a " style="left:432px;top:738px;width:1px;height:20px;background:#d0cdca"></div><div class="a " style="left:512px;top:738px;width:1px;height:20px;background:#d0cdca"></div><div class="a " style="left:1219px;top:738px;width:1px;height:20px;background:#d0cdca"></div><svg style="left:7px;top:742px" width="11" height="11" viewBox="0 0 11 11" shape-rendering="crispEdges"><g fill="#000"><rect x="0" y="5" width="4" height="1"/><rect x="7" y="5" width="4" height="1"/><rect x="5" y="0" width="1" height="4"/><rect x="5" y="7" width="1" height="4"/><rect x="5" y="5" width="1" height="1"/></g><g fill="#a00000"><rect x="0" y="5" width="1" height="1"/><rect x="10" y="5" width="1" height="1"/><rect x="5" y="0" width="1" height="1"/><rect x="5" y="10" width="1" height="1"/></g></svg><svg style="left:108px;top:740px" width="14" height="16" viewBox="0 0 14 16" shape-rendering="crispEdges"><g fill="#000"><rect x="2" y="3" width="1" height="11"/><rect x="2" y="3" width="10" height="1"/><rect x="12" y="1" width="1" height="5"/><rect x="10" y="1" width="1" height="1"/><rect x="10" y="5" width="1" height="1"/><rect x="11" y="2" width="1" height="3"/><rect x="0" y="13" width="5" height="1"/><rect x="1" y="11" width="1" height="1"/><rect x="3" y="11" width="1" height="1"/><rect x="6" y="13" width="1" height="1"/><rect x="8" y="13" width="1" height="1"/><rect x="10" y="13" width="1" height="1"/><rect x="12" y="13" width="1" height="1"/><rect x="12" y="7" width="1" height="1"/><rect x="12" y="9" width="1" height="1"/><rect x="12" y="11" width="1" height="1"/></g></svg><svg style="left:219px;top:742px" width="11" height="11" viewBox="0 0 11 11" shape-rendering="crispEdges"><g fill="#000"><rect x="0" y="0" width="2" height="1"/><rect x="0" y="0" width="1" height="2"/><rect x="9" y="0" width="2" height="1"/><rect x="10" y="0" width="1" height="2"/><rect x="0" y="10" width="2" height="1"/><rect x="0" y="9" width="1" height="2"/><rect x="9" y="10" width="2" height="1"/><rect x="10" y="9" width="1" height="2"/><rect x="4" y="0" width="1" height="1"/><rect x="3" y="0" width="2" height="1"/><rect x="6" y="0" width="2" height="1"/><rect x="3" y="10" width="2" height="1"/><rect x="6" y="10" width="2" height="1"/><rect x="0" y="3" width="1" height="2"/><rect x="0" y="6" width="1" height="2"/><rect x="10" y="3" width="1" height="2"/><rect x="10" y="6" width="1" height="2"/></g></svg><svg style="left:438px;top:741px" width="14" height="14" viewBox="0 0 14 14" ><circle cx="5.5" cy="5.5" r="4.5" fill="none" stroke="#000" stroke-width="1.2"/><path d="M3 5.5 H8 M5.5 3 V8" stroke="#000" stroke-width="1.2"/><path d="M8.5 8.5 L13 13" stroke="#000" stroke-width="2"/></svg><svg style="left:1226px;top:748px" width="11" height="11" viewBox="0 0 11 11" shape-rendering="crispEdges"><rect x="9" y="1" width="2" height="2" fill="#fff"/><rect x="8" y="0" width="2" height="2" fill="#a8a8a8"/><rect x="5" y="5" width="2" height="2" fill="#fff"/><rect x="4" y="4" width="2" height="2" fill="#a8a8a8"/><rect x="9" y="5" width="2" height="2" fill="#fff"/><rect x="8" y="4" width="2" height="2" fill="#a8a8a8"/><rect x="1" y="9" width="2" height="2" fill="#fff"/><rect x="0" y="8" width="2" height="2" fill="#a8a8a8"/><rect x="5" y="9" width="2" height="2" fill="#fff"/><rect x="4" y="8" width="2" height="2" fill="#a8a8a8"/><rect x="9" y="9" width="2" height="2" fill="#fff"/><rect x="8" y="8" width="2" height="2" fill="#a8a8a8"/></svg></body></html>
